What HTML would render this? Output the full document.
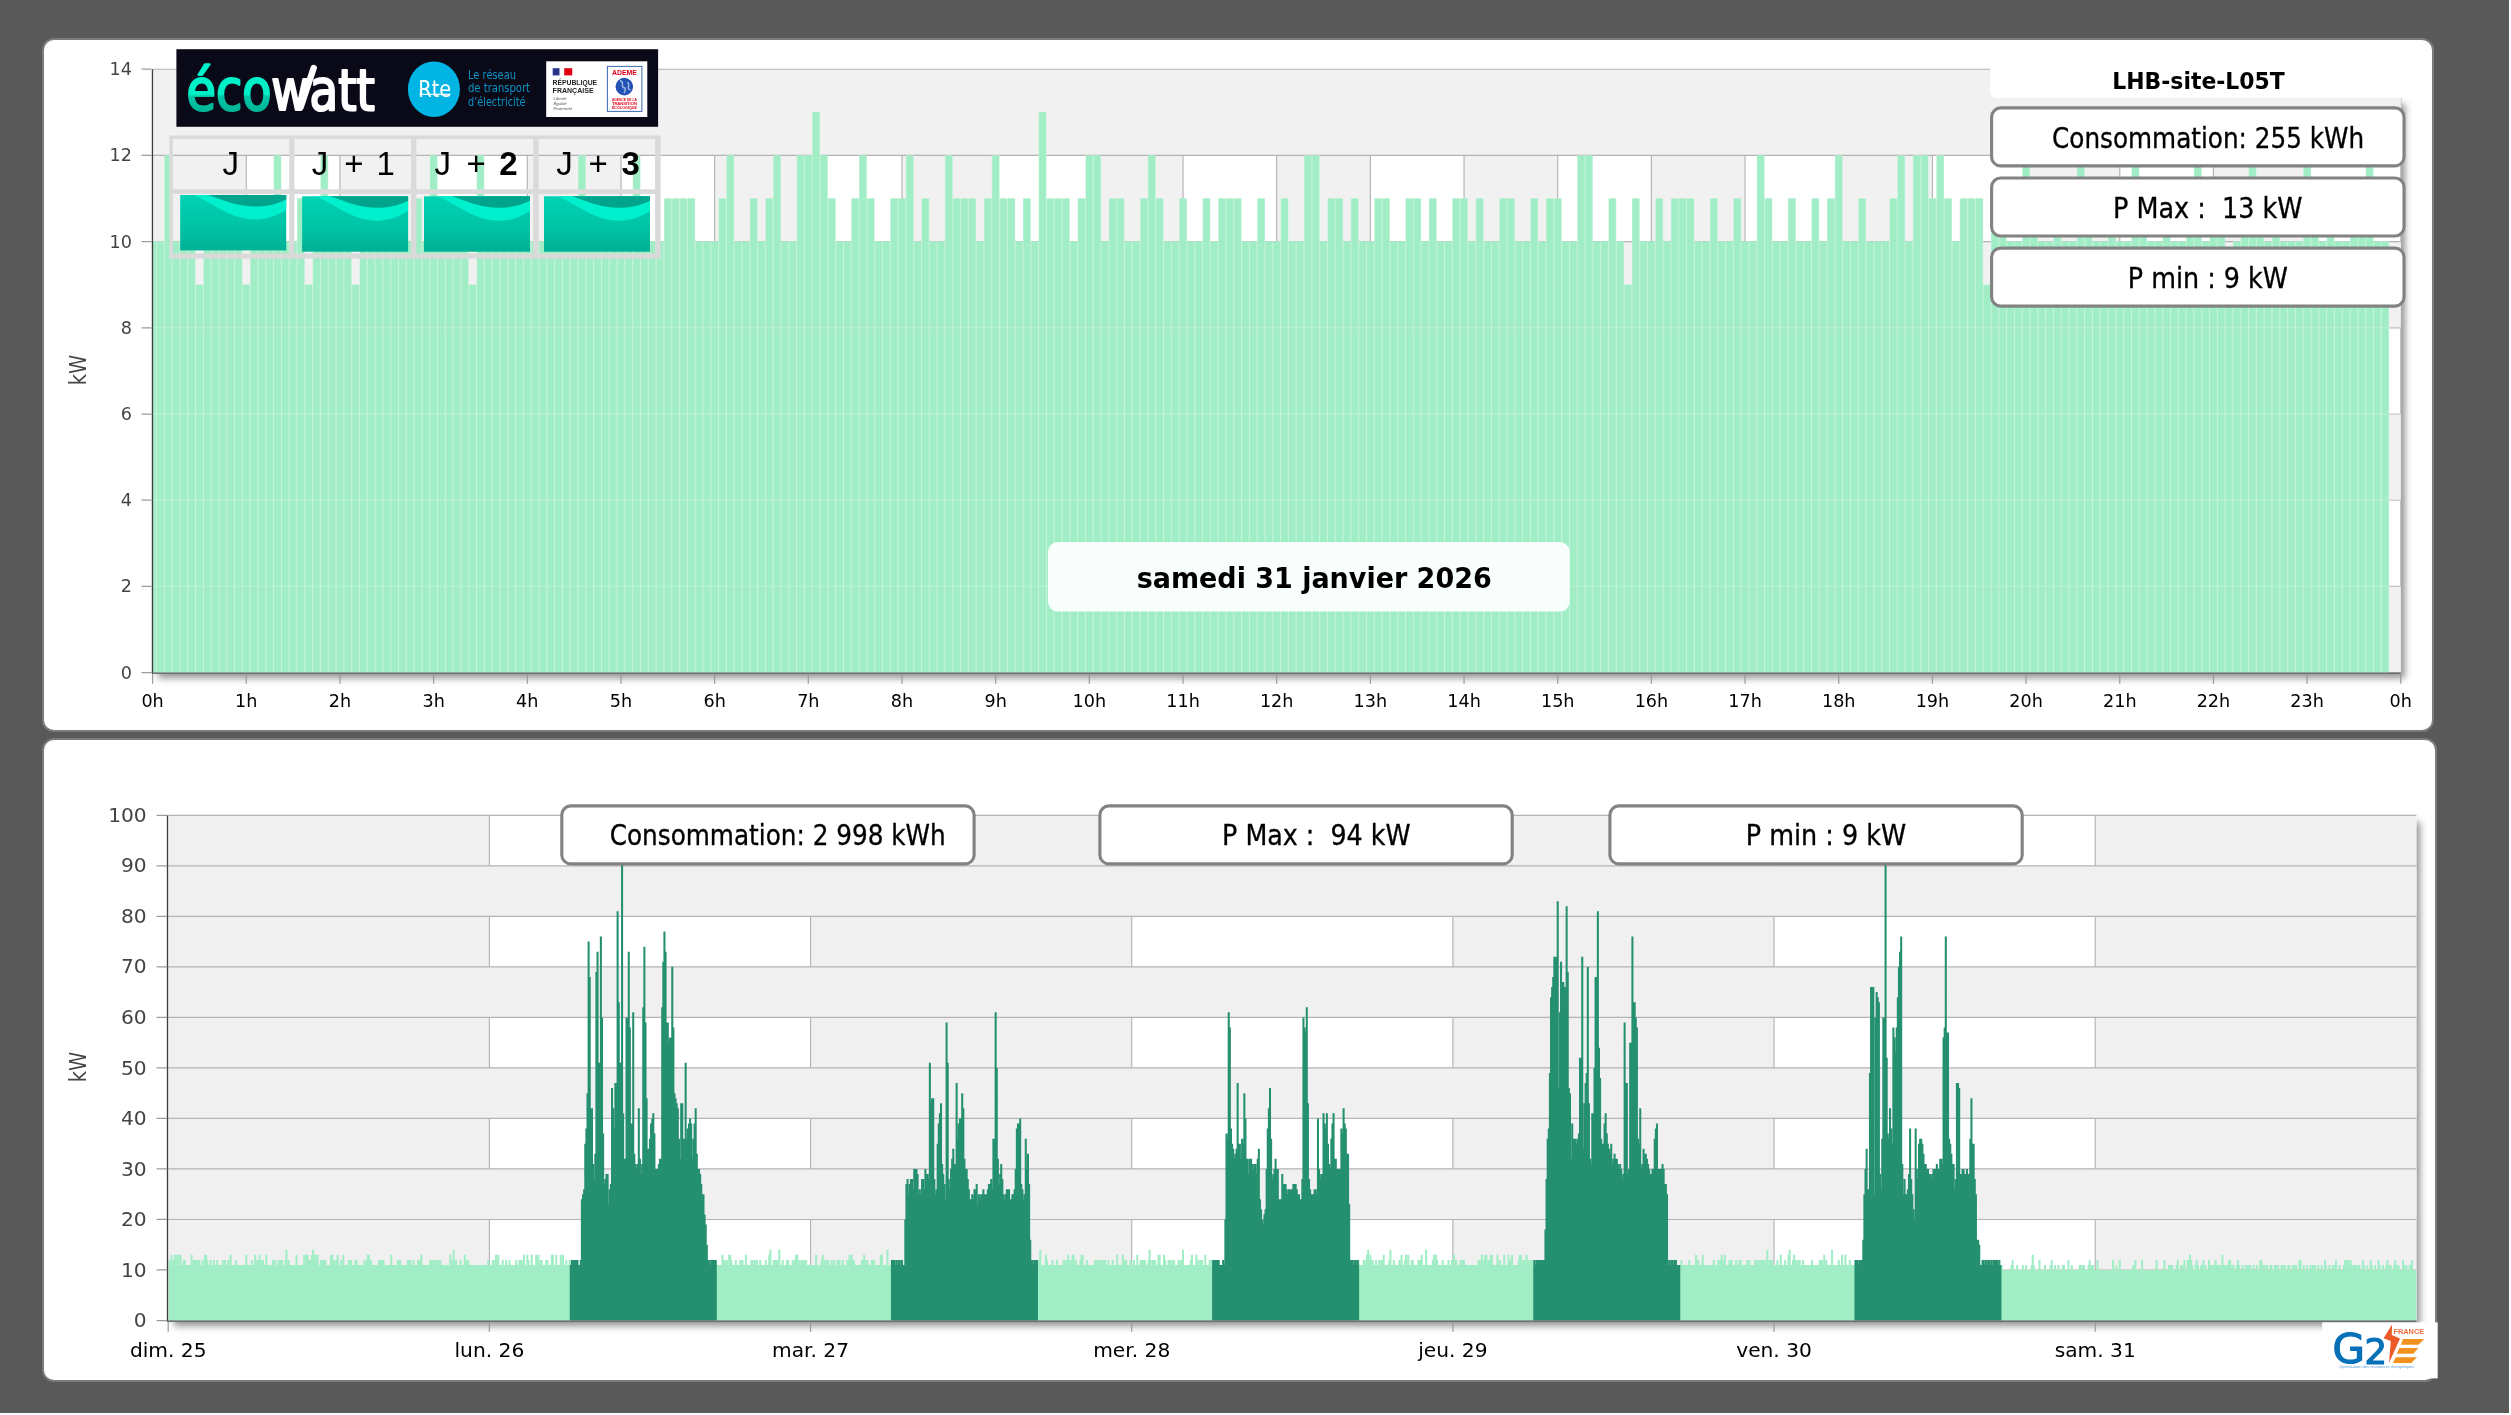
<!DOCTYPE html>
<html lang="fr">
<head>
<meta charset="utf-8">
<title>LHB-site-L05T - Consommation</title>
<style>
html,body{margin:0;padding:0;background:#fff}
body{width:2511px;height:1415px;overflow:hidden;position:relative;font-family:"DejaVu Sans","Liberation Sans",sans-serif}
#page{position:absolute;left:0;top:0;width:2509px;height:1413.3px;background:#595959;overflow:hidden}
.panel{position:absolute;background:#fff;border:2px solid #7b7b7b;border-radius:12px;box-sizing:border-box}
#p1{left:42px;top:38px;width:2392px;height:694px}
#p2{left:42px;top:738px;width:2395px;height:644px}
.shadow{position:absolute;background:#fff;box-shadow:4px 4px 7px rgba(0,0,0,.43)}
#s1{left:154px;top:100px;width:2246.8px;height:573.8px}
#s2{left:170px;top:818px;width:2246.4px;height:504px}
svg.layer{position:absolute;left:0;top:0;width:2511px;height:1415px;overflow:hidden;will-change:transform}
svg.layer text{font-family:"DejaVu Sans",Verdana,sans-serif;font-size:17.6px}
svg.layer text.tah{font-family:"DejaVu Sans Condensed","DejaVu Sans",Tahoma,sans-serif;font-stretch:condensed;font-size:27.8px;fill:#000;stroke:#000;stroke-width:.3px}
svg.layer text.tahb{font-family:"DejaVu Sans Condensed","DejaVu Sans",Tahoma,sans-serif;font-stretch:condensed;font-weight:bold;fill:#000}
svg.layer text.ari{font-family:"Liberation Sans",Arial,sans-serif}
</style>
</head>
<body>
<div id="page">
<div class="panel" id="p1"></div>
<div class="panel" id="p2"></div>
<div class="shadow" id="s1"></div>
<div class="shadow" id="s2"></div>
<svg class="layer" id="chart1" viewBox="0 0 2511 1415">
<rect x="152.6" y="69.2" width="2248.2" height="603.4" fill="#fff"/>
<rect x="152.6" y="69.2" width="93.68" height="603.4" fill="#f1f1f1"/>
<rect x="339.95" y="69.2" width="93.68" height="603.4" fill="#f1f1f1"/>
<rect x="527.3" y="69.2" width="93.68" height="603.4" fill="#f1f1f1"/>
<rect x="714.65" y="69.2" width="93.68" height="603.4" fill="#f1f1f1"/>
<rect x="902" y="69.2" width="93.68" height="603.4" fill="#f1f1f1"/>
<rect x="1089.35" y="69.2" width="93.68" height="603.4" fill="#f1f1f1"/>
<rect x="1276.7" y="69.2" width="93.68" height="603.4" fill="#f1f1f1"/>
<rect x="1464.05" y="69.2" width="93.68" height="603.4" fill="#f1f1f1"/>
<rect x="1651.4" y="69.2" width="93.68" height="603.4" fill="#f1f1f1"/>
<rect x="1838.75" y="69.2" width="93.68" height="603.4" fill="#f1f1f1"/>
<rect x="2026.1" y="69.2" width="93.68" height="603.4" fill="#f1f1f1"/>
<rect x="2213.45" y="69.2" width="93.68" height="603.4" fill="#f1f1f1"/>
<path d="M246.28 69.2V672.6M339.95 69.2V672.6M433.62 69.2V672.6M527.3 69.2V672.6M620.98 69.2V672.6M714.65 69.2V672.6M808.33 69.2V672.6M902 69.2V672.6M995.68 69.2V672.6M1089.35 69.2V672.6M1183.03 69.2V672.6M1276.7 69.2V672.6M1370.38 69.2V672.6M1464.05 69.2V672.6M1557.73 69.2V672.6M1651.4 69.2V672.6M1745.08 69.2V672.6M1838.75 69.2V672.6M1932.43 69.2V672.6M2026.1 69.2V672.6M2119.78 69.2V672.6M2213.45 69.2V672.6M2307.12 69.2V672.6M2400.8 69.2V672.6" stroke="#b4b4b4" stroke-width="1.15" fill="none"/>
<rect x="152.6" y="69.2" width="2248.2" height="86.2" fill="#f1f1f1"/>
<rect x="152.6" y="241.6" width="2248.2" height="86.2" fill="#f1f1f1"/>
<rect x="152.6" y="414" width="2248.2" height="86.2" fill="#f1f1f1"/>
<rect x="152.6" y="586.4" width="2248.2" height="86.2" fill="#f1f1f1"/>
<path d="M152.6 672.6H2400.8M152.6 586.4H2400.8M152.6 500.2H2400.8M152.6 414H2400.8M152.6 327.8H2400.8M152.6 241.6H2400.8M152.6 155.4H2400.8M152.6 69.2H2400.8" stroke="#b4b4b4" stroke-width="1.15" fill="none"/>
<path d="M153 672.6V241.6H156.5V672.6ZM156.5 672.6V241.6H164.31V672.6ZM164.31 672.6V155.4H172.12V672.6ZM172.12 672.6V241.6H179.92V672.6ZM179.92 672.6V241.6H187.73V672.6ZM187.73 672.6V241.6H195.53V672.6ZM195.53 672.6V284.7H203.34V672.6ZM203.34 672.6V241.6H211.15V672.6ZM211.15 672.6V241.6H218.95V672.6ZM218.95 672.6V241.6H226.76V672.6ZM226.76 672.6V241.6H234.57V672.6ZM234.57 672.6V241.6H242.37V672.6ZM242.37 672.6V284.7H250.18V672.6ZM250.18 672.6V241.6H257.98V672.6ZM257.98 672.6V241.6H265.79V672.6ZM265.79 672.6V241.6H273.6V672.6ZM273.6 672.6V155.4H281.4V672.6ZM281.4 672.6V241.6H289.21V672.6ZM289.21 672.6V241.6H297.02V672.6ZM297.02 672.6V198.5H304.82V672.6ZM304.82 672.6V284.7H312.63V672.6ZM312.63 672.6V241.6H320.43V672.6ZM320.43 672.6V155.4H328.24V672.6ZM328.24 672.6V241.6H336.05V672.6ZM336.05 672.6V241.6H343.85V672.6ZM343.85 672.6V241.6H351.66V672.6ZM351.66 672.6V284.7H359.47V672.6ZM359.47 672.6V241.6H367.27V672.6ZM367.27 672.6V241.6H375.08V672.6ZM375.08 672.6V241.6H382.88V672.6ZM382.88 672.6V241.6H390.69V672.6ZM390.69 672.6V241.6H398.5V672.6ZM398.5 672.6V241.6H406.3V672.6ZM406.3 672.6V241.6H414.11V672.6ZM414.11 672.6V198.5H421.92V672.6ZM421.92 672.6V241.6H429.72V672.6ZM429.72 672.6V155.4H437.53V672.6ZM437.53 672.6V241.6H445.33V672.6ZM445.33 672.6V241.6H453.14V672.6ZM453.14 672.6V241.6H460.95V672.6ZM460.95 672.6V241.6H468.75V672.6ZM468.75 672.6V284.7H476.56V672.6ZM476.56 672.6V155.4H484.37V672.6ZM484.37 672.6V241.6H492.17V672.6ZM492.17 672.6V241.6H499.98V672.6ZM499.98 672.6V241.6H507.78V672.6ZM507.78 672.6V241.6H515.59V672.6ZM515.59 672.6V241.6H523.4V672.6ZM523.4 672.6V241.6H531.2V672.6ZM531.2 672.6V241.6H539.01V672.6ZM539.01 672.6V241.6H546.82V672.6ZM546.82 672.6V241.6H554.62V672.6ZM554.62 672.6V241.6H562.43V672.6ZM562.43 672.6V241.6H570.23V672.6ZM570.23 672.6V241.6H578.04V672.6ZM578.04 672.6V155.4H585.85V672.6ZM585.85 672.6V241.6H593.65V672.6ZM593.65 672.6V241.6H601.46V672.6ZM601.46 672.6V241.6H609.27V672.6ZM609.27 672.6V241.6H617.07V672.6ZM617.07 672.6V241.6H624.88V672.6ZM624.88 672.6V241.6H632.68V672.6ZM632.68 672.6V155.4H640.49V672.6ZM640.49 672.6V241.6H648.3V672.6ZM648.3 672.6V241.6H656.1V672.6ZM656.1 672.6V241.6H663.91V672.6ZM663.91 672.6V198.5H671.72V672.6ZM671.72 672.6V198.5H679.52V672.6ZM679.52 672.6V198.5H687.33V672.6ZM687.33 672.6V198.5H695.13V672.6ZM695.13 672.6V241.6H702.94V672.6ZM702.94 672.6V241.6H710.75V672.6ZM710.75 672.6V241.6H718.55V672.6ZM718.55 672.6V198.5H726.36V672.6ZM726.36 672.6V155.4H734.17V672.6ZM734.17 672.6V241.6H741.97V672.6ZM741.97 672.6V241.6H749.78V672.6ZM749.78 672.6V198.5H757.58V672.6ZM757.58 672.6V241.6H765.39V672.6ZM765.39 672.6V198.5H773.2V672.6ZM773.2 672.6V155.4H781V672.6ZM781 672.6V241.6H788.81V672.6ZM788.81 672.6V241.6H796.62V672.6ZM796.62 672.6V155.4H804.42V672.6ZM804.42 672.6V155.4H812.23V672.6ZM812.23 672.6V112.3H820.03V672.6ZM820.03 672.6V155.4H827.84V672.6ZM827.84 672.6V198.5H835.65V672.6ZM835.65 672.6V241.6H843.45V672.6ZM843.45 672.6V241.6H851.26V672.6ZM851.26 672.6V198.5H859.07V672.6ZM859.07 672.6V155.4H866.87V672.6ZM866.87 672.6V198.5H874.68V672.6ZM874.68 672.6V241.6H882.48V672.6ZM882.48 672.6V241.6H890.29V672.6ZM890.29 672.6V198.5H898.1V672.6ZM898.1 672.6V198.5H905.9V672.6ZM905.9 672.6V155.4H913.71V672.6ZM913.71 672.6V241.6H921.52V672.6ZM921.52 672.6V198.5H929.32V672.6ZM929.32 672.6V241.6H937.13V672.6ZM937.13 672.6V241.6H944.93V672.6ZM944.93 672.6V155.4H952.74V672.6ZM952.74 672.6V198.5H960.55V672.6ZM960.55 672.6V198.5H968.35V672.6ZM968.35 672.6V198.5H976.16V672.6ZM976.16 672.6V241.6H983.97V672.6ZM983.97 672.6V198.5H991.77V672.6ZM991.77 672.6V155.4H999.58V672.6ZM999.58 672.6V198.5H1007.38V672.6ZM1007.38 672.6V198.5H1015.19V672.6ZM1015.19 672.6V241.6H1023V672.6ZM1023 672.6V198.5H1030.8V672.6ZM1030.8 672.6V241.6H1038.61V672.6ZM1038.61 672.6V112.3H1046.42V672.6ZM1046.42 672.6V198.5H1054.22V672.6ZM1054.22 672.6V198.5H1062.03V672.6ZM1062.03 672.6V198.5H1069.83V672.6ZM1069.83 672.6V241.6H1077.64V672.6ZM1077.64 672.6V198.5H1085.45V672.6ZM1085.45 672.6V155.4H1093.25V672.6ZM1093.25 672.6V155.4H1101.06V672.6ZM1101.06 672.6V241.6H1108.87V672.6ZM1108.87 672.6V198.5H1116.67V672.6ZM1116.67 672.6V198.5H1124.48V672.6ZM1124.48 672.6V241.6H1132.28V672.6ZM1132.28 672.6V241.6H1140.09V672.6ZM1140.09 672.6V198.5H1147.9V672.6ZM1147.9 672.6V155.4H1155.7V672.6ZM1155.7 672.6V198.5H1163.51V672.6ZM1163.51 672.6V241.6H1171.32V672.6ZM1171.32 672.6V241.6H1179.12V672.6ZM1179.12 672.6V198.5H1186.93V672.6ZM1186.93 672.6V241.6H1194.73V672.6ZM1194.73 672.6V241.6H1202.54V672.6ZM1202.54 672.6V198.5H1210.35V672.6ZM1210.35 672.6V241.6H1218.15V672.6ZM1218.15 672.6V198.5H1225.96V672.6ZM1225.96 672.6V198.5H1233.77V672.6ZM1233.77 672.6V198.5H1241.57V672.6ZM1241.57 672.6V241.6H1249.38V672.6ZM1249.38 672.6V241.6H1257.18V672.6ZM1257.18 672.6V198.5H1264.99V672.6ZM1264.99 672.6V241.6H1272.8V672.6ZM1272.8 672.6V241.6H1280.6V672.6ZM1280.6 672.6V198.5H1288.41V672.6ZM1288.41 672.6V241.6H1296.22V672.6ZM1296.22 672.6V241.6H1304.02V672.6ZM1304.02 672.6V155.4H1311.83V672.6ZM1311.83 672.6V155.4H1319.63V672.6ZM1319.63 672.6V241.6H1327.44V672.6ZM1327.44 672.6V198.5H1335.25V672.6ZM1335.25 672.6V198.5H1343.05V672.6ZM1343.05 672.6V241.6H1350.86V672.6ZM1350.86 672.6V198.5H1358.67V672.6ZM1358.67 672.6V241.6H1366.47V672.6ZM1366.47 672.6V241.6H1374.28V672.6ZM1374.28 672.6V198.5H1382.08V672.6ZM1382.08 672.6V198.5H1389.89V672.6ZM1389.89 672.6V241.6H1397.7V672.6ZM1397.7 672.6V241.6H1405.5V672.6ZM1405.5 672.6V198.5H1413.31V672.6ZM1413.31 672.6V198.5H1421.12V672.6ZM1421.12 672.6V241.6H1428.92V672.6ZM1428.92 672.6V198.5H1436.73V672.6ZM1436.73 672.6V241.6H1444.53V672.6ZM1444.53 672.6V241.6H1452.34V672.6ZM1452.34 672.6V198.5H1460.15V672.6ZM1460.15 672.6V198.5H1467.95V672.6ZM1467.95 672.6V241.6H1475.76V672.6ZM1475.76 672.6V198.5H1483.57V672.6ZM1483.57 672.6V241.6H1491.37V672.6ZM1491.37 672.6V241.6H1499.18V672.6ZM1499.18 672.6V198.5H1506.98V672.6ZM1506.98 672.6V198.5H1514.79V672.6ZM1514.79 672.6V241.6H1522.6V672.6ZM1522.6 672.6V241.6H1530.4V672.6ZM1530.4 672.6V198.5H1538.21V672.6ZM1538.21 672.6V241.6H1546.02V672.6ZM1546.02 672.6V198.5H1553.82V672.6ZM1553.82 672.6V198.5H1561.63V672.6ZM1561.63 672.6V241.6H1569.43V672.6ZM1569.43 672.6V241.6H1577.24V672.6ZM1577.24 672.6V155.4H1585.05V672.6ZM1585.05 672.6V155.4H1592.85V672.6ZM1592.85 672.6V241.6H1600.66V672.6ZM1600.66 672.6V241.6H1608.47V672.6ZM1608.47 672.6V198.5H1616.27V672.6ZM1616.27 672.6V241.6H1624.08V672.6ZM1624.08 672.6V284.7H1631.88V672.6ZM1631.88 672.6V198.5H1639.69V672.6ZM1639.69 672.6V241.6H1647.5V672.6ZM1647.5 672.6V241.6H1655.3V672.6ZM1655.3 672.6V198.5H1663.11V672.6ZM1663.11 672.6V241.6H1670.92V672.6ZM1670.92 672.6V198.5H1678.72V672.6ZM1678.72 672.6V198.5H1686.53V672.6ZM1686.53 672.6V198.5H1694.33V672.6ZM1694.33 672.6V241.6H1702.14V672.6ZM1702.14 672.6V241.6H1709.95V672.6ZM1709.95 672.6V198.5H1717.75V672.6ZM1717.75 672.6V241.6H1725.56V672.6ZM1725.56 672.6V241.6H1733.37V672.6ZM1733.37 672.6V198.5H1741.17V672.6ZM1741.17 672.6V241.6H1748.98V672.6ZM1748.98 672.6V241.6H1756.78V672.6ZM1756.78 672.6V155.4H1764.59V672.6ZM1764.59 672.6V198.5H1772.4V672.6ZM1772.4 672.6V241.6H1780.2V672.6ZM1780.2 672.6V241.6H1788.01V672.6ZM1788.01 672.6V198.5H1795.82V672.6ZM1795.82 672.6V241.6H1803.62V672.6ZM1803.62 672.6V241.6H1811.43V672.6ZM1811.43 672.6V198.5H1819.23V672.6ZM1819.23 672.6V241.6H1827.04V672.6ZM1827.04 672.6V198.5H1834.85V672.6ZM1834.85 672.6V155.4H1842.65V672.6ZM1842.65 672.6V241.6H1850.46V672.6ZM1850.46 672.6V241.6H1858.27V672.6ZM1858.27 672.6V198.5H1866.07V672.6ZM1866.07 672.6V241.6H1873.88V672.6ZM1873.88 672.6V241.6H1881.68V672.6ZM1881.68 672.6V241.6H1889.49V672.6ZM1889.49 672.6V198.5H1897.3V672.6ZM1897.3 672.6V155.4H1905.1V672.6ZM1905.1 672.6V241.6H1912.91V672.6ZM1912.91 672.6V155.4H1920.72V672.6ZM1920.72 672.6V155.4H1928.52V672.6ZM1928.52 672.6V198.5H1936.33V672.6ZM1936.33 672.6V155.4H1944.13V672.6ZM1944.13 672.6V198.5H1951.94V672.6ZM1951.94 672.6V241.6H1959.75V672.6ZM1959.75 672.6V198.5H1967.55V672.6ZM1967.55 672.6V198.5H1975.36V672.6ZM1975.36 672.6V198.5H1983.17V672.6ZM1983.17 672.6V284.7H1990.97V672.6ZM1990.97 672.6V198.5H1998.78V672.6ZM1998.78 672.6V198.5H2006.58V672.6ZM2006.58 672.6V241.6H2014.39V672.6ZM2014.39 672.6V241.6H2022.2V672.6ZM2022.2 672.6V155.4H2030V672.6ZM2030 672.6V198.5H2037.81V672.6ZM2037.81 672.6V241.6H2045.62V672.6ZM2045.62 672.6V241.6H2053.42V672.6ZM2053.42 672.6V198.5H2061.23V672.6ZM2061.23 672.6V241.6H2069.03V672.6ZM2069.03 672.6V241.6H2076.84V672.6ZM2076.84 672.6V155.4H2084.65V672.6ZM2084.65 672.6V198.5H2092.45V672.6ZM2092.45 672.6V241.6H2100.26V672.6ZM2100.26 672.6V241.6H2108.07V672.6ZM2108.07 672.6V198.5H2115.87V672.6ZM2115.87 672.6V241.6H2123.68V672.6ZM2123.68 672.6V241.6H2131.48V672.6ZM2131.48 672.6V155.4H2139.29V672.6ZM2139.29 672.6V198.5H2147.1V672.6ZM2147.1 672.6V241.6H2154.9V672.6ZM2154.9 672.6V241.6H2162.71V672.6ZM2162.71 672.6V198.5H2170.52V672.6ZM2170.52 672.6V241.6H2178.32V672.6ZM2178.32 672.6V241.6H2186.13V672.6ZM2186.13 672.6V198.5H2193.93V672.6ZM2193.93 672.6V155.4H2201.74V672.6ZM2201.74 672.6V241.6H2209.55V672.6ZM2209.55 672.6V198.5H2217.35V672.6ZM2217.35 672.6V198.5H2225.16V672.6ZM2225.16 672.6V284.7H2232.97V672.6ZM2232.97 672.6V241.6H2240.77V672.6ZM2240.77 672.6V198.5H2248.58V672.6ZM2248.58 672.6V155.4H2256.38V672.6ZM2256.38 672.6V198.5H2264.19V672.6ZM2264.19 672.6V241.6H2272V672.6ZM2272 672.6V198.5H2279.8V672.6ZM2279.8 672.6V241.6H2287.61V672.6ZM2287.61 672.6V241.6H2295.42V672.6ZM2295.42 672.6V241.6H2303.22V672.6ZM2303.22 672.6V155.4H2311.03V672.6ZM2311.03 672.6V198.5H2318.83V672.6ZM2318.83 672.6V241.6H2326.64V672.6ZM2326.64 672.6V198.5H2334.45V672.6ZM2334.45 672.6V241.6H2342.25V672.6ZM2342.25 672.6V241.6H2350.06V672.6ZM2350.06 672.6V198.5H2357.87V672.6ZM2357.87 672.6V198.5H2365.67V672.6ZM2365.67 672.6V155.4H2373.48V672.6ZM2373.48 672.6V241.6H2381.28V672.6ZM2381.28 672.6V241.6H2389.09V672.6Z" fill="#c6f3dc"/>
<path d="M153 672.6V241.6H155.95V672.6ZM157.06 672.6V241.6H163.76V672.6ZM164.86 672.6V155.4H171.56V672.6ZM172.67 672.6V241.6H179.37V672.6ZM180.47 672.6V241.6H187.17V672.6ZM188.28 672.6V241.6H194.98V672.6ZM196.09 672.6V284.7H202.79V672.6ZM203.89 672.6V241.6H210.59V672.6ZM211.7 672.6V241.6H218.4V672.6ZM219.51 672.6V241.6H226.21V672.6ZM227.31 672.6V241.6H234.01V672.6ZM235.12 672.6V241.6H241.82V672.6ZM242.93 672.6V284.7H249.62V672.6ZM250.73 672.6V241.6H257.43V672.6ZM258.54 672.6V241.6H265.24V672.6ZM266.34 672.6V241.6H273.04V672.6ZM274.15 672.6V155.4H280.85V672.6ZM281.96 672.6V241.6H288.66V672.6ZM289.76 672.6V241.6H296.46V672.6ZM297.57 672.6V198.5H304.27V672.6ZM305.38 672.6V284.7H312.08V672.6ZM313.18 672.6V241.6H319.88V672.6ZM320.99 672.6V155.4H327.69V672.6ZM328.79 672.6V241.6H335.49V672.6ZM336.6 672.6V241.6H343.3V672.6ZM344.41 672.6V241.6H351.11V672.6ZM352.21 672.6V284.7H358.91V672.6ZM360.02 672.6V241.6H366.72V672.6ZM367.83 672.6V241.6H374.53V672.6ZM375.63 672.6V241.6H382.33V672.6ZM383.44 672.6V241.6H390.14V672.6ZM391.24 672.6V241.6H397.94V672.6ZM399.05 672.6V241.6H405.75V672.6ZM406.86 672.6V241.6H413.56V672.6ZM414.66 672.6V198.5H421.36V672.6ZM422.47 672.6V241.6H429.17V672.6ZM430.27 672.6V155.4H436.98V672.6ZM438.08 672.6V241.6H444.78V672.6ZM445.89 672.6V241.6H452.59V672.6ZM453.69 672.6V241.6H460.39V672.6ZM461.5 672.6V241.6H468.2V672.6ZM469.31 672.6V284.7H476.01V672.6ZM477.11 672.6V155.4H483.81V672.6ZM484.92 672.6V241.6H491.62V672.6ZM492.73 672.6V241.6H499.43V672.6ZM500.53 672.6V241.6H507.23V672.6ZM508.34 672.6V241.6H515.04V672.6ZM516.14 672.6V241.6H522.84V672.6ZM523.95 672.6V241.6H530.65V672.6ZM531.76 672.6V241.6H538.46V672.6ZM539.56 672.6V241.6H546.26V672.6ZM547.37 672.6V241.6H554.07V672.6ZM555.18 672.6V241.6H561.88V672.6ZM562.98 672.6V241.6H569.68V672.6ZM570.79 672.6V241.6H577.49V672.6ZM578.59 672.6V155.4H585.29V672.6ZM586.4 672.6V241.6H593.1V672.6ZM594.21 672.6V241.6H600.91V672.6ZM602.01 672.6V241.6H608.71V672.6ZM609.82 672.6V241.6H616.52V672.6ZM617.62 672.6V241.6H624.33V672.6ZM625.43 672.6V241.6H632.13V672.6ZM633.24 672.6V155.4H639.94V672.6ZM641.04 672.6V241.6H647.74V672.6ZM648.85 672.6V241.6H655.55V672.6ZM656.66 672.6V241.6H663.36V672.6ZM664.46 672.6V198.5H671.16V672.6ZM672.27 672.6V198.5H678.97V672.6ZM680.08 672.6V198.5H686.78V672.6ZM687.88 672.6V198.5H694.58V672.6ZM695.69 672.6V241.6H702.39V672.6ZM703.49 672.6V241.6H710.19V672.6ZM711.3 672.6V241.6H718V672.6ZM719.11 672.6V198.5H725.81V672.6ZM726.91 672.6V155.4H733.61V672.6ZM734.72 672.6V241.6H741.42V672.6ZM742.53 672.6V241.6H749.23V672.6ZM750.33 672.6V198.5H757.03V672.6ZM758.14 672.6V241.6H764.84V672.6ZM765.94 672.6V198.5H772.64V672.6ZM773.75 672.6V155.4H780.45V672.6ZM781.56 672.6V241.6H788.26V672.6ZM789.36 672.6V241.6H796.06V672.6ZM797.17 672.6V155.4H803.87V672.6ZM804.98 672.6V155.4H811.68V672.6ZM812.78 672.6V112.3H819.48V672.6ZM820.59 672.6V155.4H827.29V672.6ZM828.39 672.6V198.5H835.09V672.6ZM836.2 672.6V241.6H842.9V672.6ZM844.01 672.6V241.6H850.71V672.6ZM851.81 672.6V198.5H858.51V672.6ZM859.62 672.6V155.4H866.32V672.6ZM867.43 672.6V198.5H874.13V672.6ZM875.23 672.6V241.6H881.93V672.6ZM883.04 672.6V241.6H889.74V672.6ZM890.84 672.6V198.5H897.54V672.6ZM898.65 672.6V198.5H905.35V672.6ZM906.46 672.6V155.4H913.16V672.6ZM914.26 672.6V241.6H920.96V672.6ZM922.07 672.6V198.5H928.77V672.6ZM929.88 672.6V241.6H936.58V672.6ZM937.68 672.6V241.6H944.38V672.6ZM945.49 672.6V155.4H952.19V672.6ZM953.29 672.6V198.5H959.99V672.6ZM961.1 672.6V198.5H967.8V672.6ZM968.91 672.6V198.5H975.61V672.6ZM976.71 672.6V241.6H983.41V672.6ZM984.52 672.6V198.5H991.22V672.6ZM992.33 672.6V155.4H999.03V672.6ZM1000.13 672.6V198.5H1006.83V672.6ZM1007.94 672.6V198.5H1014.64V672.6ZM1015.74 672.6V241.6H1022.44V672.6ZM1023.55 672.6V198.5H1030.25V672.6ZM1031.36 672.6V241.6H1038.06V672.6ZM1039.16 672.6V112.3H1045.86V672.6ZM1046.97 672.6V198.5H1053.67V672.6ZM1054.78 672.6V198.5H1061.47V672.6ZM1062.58 672.6V198.5H1069.28V672.6ZM1070.39 672.6V241.6H1077.09V672.6ZM1078.19 672.6V198.5H1084.89V672.6ZM1086 672.6V155.4H1092.7V672.6ZM1093.81 672.6V155.4H1100.51V672.6ZM1101.61 672.6V241.6H1108.31V672.6ZM1109.42 672.6V198.5H1116.12V672.6ZM1117.23 672.6V198.5H1123.92V672.6ZM1125.03 672.6V241.6H1131.73V672.6ZM1132.84 672.6V241.6H1139.54V672.6ZM1140.64 672.6V198.5H1147.34V672.6ZM1148.45 672.6V155.4H1155.15V672.6ZM1156.26 672.6V198.5H1162.96V672.6ZM1164.06 672.6V241.6H1170.76V672.6ZM1171.87 672.6V241.6H1178.57V672.6ZM1179.68 672.6V198.5H1186.38V672.6ZM1187.48 672.6V241.6H1194.18V672.6ZM1195.29 672.6V241.6H1201.99V672.6ZM1203.09 672.6V198.5H1209.79V672.6ZM1210.9 672.6V241.6H1217.6V672.6ZM1218.71 672.6V198.5H1225.41V672.6ZM1226.51 672.6V198.5H1233.21V672.6ZM1234.32 672.6V198.5H1241.02V672.6ZM1242.13 672.6V241.6H1248.83V672.6ZM1249.93 672.6V241.6H1256.63V672.6ZM1257.74 672.6V198.5H1264.44V672.6ZM1265.54 672.6V241.6H1272.24V672.6ZM1273.35 672.6V241.6H1280.05V672.6ZM1281.16 672.6V198.5H1287.86V672.6ZM1288.96 672.6V241.6H1295.66V672.6ZM1296.77 672.6V241.6H1303.47V672.6ZM1304.58 672.6V155.4H1311.28V672.6ZM1312.38 672.6V155.4H1319.08V672.6ZM1320.19 672.6V241.6H1326.89V672.6ZM1327.99 672.6V198.5H1334.69V672.6ZM1335.8 672.6V198.5H1342.5V672.6ZM1343.61 672.6V241.6H1350.31V672.6ZM1351.41 672.6V198.5H1358.11V672.6ZM1359.22 672.6V241.6H1365.92V672.6ZM1367.03 672.6V241.6H1373.72V672.6ZM1374.83 672.6V198.5H1381.53V672.6ZM1382.64 672.6V198.5H1389.34V672.6ZM1390.44 672.6V241.6H1397.14V672.6ZM1398.25 672.6V241.6H1404.95V672.6ZM1406.06 672.6V198.5H1412.76V672.6ZM1413.86 672.6V198.5H1420.56V672.6ZM1421.67 672.6V241.6H1428.37V672.6ZM1429.48 672.6V198.5H1436.17V672.6ZM1437.28 672.6V241.6H1443.98V672.6ZM1445.09 672.6V241.6H1451.79V672.6ZM1452.89 672.6V198.5H1459.59V672.6ZM1460.7 672.6V198.5H1467.4V672.6ZM1468.51 672.6V241.6H1475.21V672.6ZM1476.31 672.6V198.5H1483.01V672.6ZM1484.12 672.6V241.6H1490.82V672.6ZM1491.93 672.6V241.6H1498.62V672.6ZM1499.73 672.6V198.5H1506.43V672.6ZM1507.54 672.6V198.5H1514.24V672.6ZM1515.34 672.6V241.6H1522.04V672.6ZM1523.15 672.6V241.6H1529.85V672.6ZM1530.96 672.6V198.5H1537.66V672.6ZM1538.76 672.6V241.6H1545.46V672.6ZM1546.57 672.6V198.5H1553.27V672.6ZM1554.38 672.6V198.5H1561.08V672.6ZM1562.18 672.6V241.6H1568.88V672.6ZM1569.99 672.6V241.6H1576.69V672.6ZM1577.79 672.6V155.4H1584.49V672.6ZM1585.6 672.6V155.4H1592.3V672.6ZM1593.41 672.6V241.6H1600.11V672.6ZM1601.21 672.6V241.6H1607.91V672.6ZM1609.02 672.6V198.5H1615.72V672.6ZM1616.83 672.6V241.6H1623.53V672.6ZM1624.63 672.6V284.7H1631.33V672.6ZM1632.44 672.6V198.5H1639.14V672.6ZM1640.24 672.6V241.6H1646.94V672.6ZM1648.05 672.6V241.6H1654.75V672.6ZM1655.86 672.6V198.5H1662.56V672.6ZM1663.66 672.6V241.6H1670.36V672.6ZM1671.47 672.6V198.5H1678.17V672.6ZM1679.28 672.6V198.5H1685.98V672.6ZM1687.08 672.6V198.5H1693.78V672.6ZM1694.89 672.6V241.6H1701.59V672.6ZM1702.69 672.6V241.6H1709.39V672.6ZM1710.5 672.6V198.5H1717.2V672.6ZM1718.31 672.6V241.6H1725.01V672.6ZM1726.11 672.6V241.6H1732.81V672.6ZM1733.92 672.6V198.5H1740.62V672.6ZM1741.73 672.6V241.6H1748.43V672.6ZM1749.53 672.6V241.6H1756.23V672.6ZM1757.34 672.6V155.4H1764.04V672.6ZM1765.14 672.6V198.5H1771.84V672.6ZM1772.95 672.6V241.6H1779.65V672.6ZM1780.76 672.6V241.6H1787.46V672.6ZM1788.56 672.6V198.5H1795.26V672.6ZM1796.37 672.6V241.6H1803.07V672.6ZM1804.18 672.6V241.6H1810.88V672.6ZM1811.98 672.6V198.5H1818.68V672.6ZM1819.79 672.6V241.6H1826.49V672.6ZM1827.59 672.6V198.5H1834.29V672.6ZM1835.4 672.6V155.4H1842.1V672.6ZM1843.21 672.6V241.6H1849.91V672.6ZM1851.01 672.6V241.6H1857.71V672.6ZM1858.82 672.6V198.5H1865.52V672.6ZM1866.63 672.6V241.6H1873.33V672.6ZM1874.43 672.6V241.6H1881.13V672.6ZM1882.24 672.6V241.6H1888.94V672.6ZM1890.04 672.6V198.5H1896.74V672.6ZM1897.85 672.6V155.4H1904.55V672.6ZM1905.66 672.6V241.6H1912.36V672.6ZM1913.46 672.6V155.4H1920.16V672.6ZM1921.27 672.6V155.4H1927.97V672.6ZM1929.08 672.6V198.5H1935.78V672.6ZM1936.88 672.6V155.4H1943.58V672.6ZM1944.69 672.6V198.5H1951.39V672.6ZM1952.49 672.6V241.6H1959.19V672.6ZM1960.3 672.6V198.5H1967V672.6ZM1968.11 672.6V198.5H1974.81V672.6ZM1975.91 672.6V198.5H1982.61V672.6ZM1983.72 672.6V284.7H1990.42V672.6ZM1991.53 672.6V198.5H1998.23V672.6ZM1999.33 672.6V198.5H2006.03V672.6ZM2007.14 672.6V241.6H2013.84V672.6ZM2014.94 672.6V241.6H2021.64V672.6ZM2022.75 672.6V155.4H2029.45V672.6ZM2030.56 672.6V198.5H2037.26V672.6ZM2038.36 672.6V241.6H2045.06V672.6ZM2046.17 672.6V241.6H2052.87V672.6ZM2053.98 672.6V198.5H2060.68V672.6ZM2061.78 672.6V241.6H2068.48V672.6ZM2069.59 672.6V241.6H2076.29V672.6ZM2077.39 672.6V155.4H2084.09V672.6ZM2085.2 672.6V198.5H2091.9V672.6ZM2093.01 672.6V241.6H2099.71V672.6ZM2100.81 672.6V241.6H2107.51V672.6ZM2108.62 672.6V198.5H2115.32V672.6ZM2116.43 672.6V241.6H2123.13V672.6ZM2124.23 672.6V241.6H2130.93V672.6ZM2132.04 672.6V155.4H2138.74V672.6ZM2139.84 672.6V198.5H2146.54V672.6ZM2147.65 672.6V241.6H2154.35V672.6ZM2155.46 672.6V241.6H2162.16V672.6ZM2163.26 672.6V198.5H2169.96V672.6ZM2171.07 672.6V241.6H2177.77V672.6ZM2178.88 672.6V241.6H2185.58V672.6ZM2186.68 672.6V198.5H2193.38V672.6ZM2194.49 672.6V155.4H2201.19V672.6ZM2202.29 672.6V241.6H2208.99V672.6ZM2210.1 672.6V198.5H2216.8V672.6ZM2217.91 672.6V198.5H2224.61V672.6ZM2225.71 672.6V284.7H2232.41V672.6ZM2233.52 672.6V241.6H2240.22V672.6ZM2241.33 672.6V198.5H2248.03V672.6ZM2249.13 672.6V155.4H2255.83V672.6ZM2256.94 672.6V198.5H2263.64V672.6ZM2264.74 672.6V241.6H2271.44V672.6ZM2272.55 672.6V198.5H2279.25V672.6ZM2280.36 672.6V241.6H2287.06V672.6ZM2288.16 672.6V241.6H2294.86V672.6ZM2295.97 672.6V241.6H2302.67V672.6ZM2303.78 672.6V155.4H2310.48V672.6ZM2311.58 672.6V198.5H2318.28V672.6ZM2319.39 672.6V241.6H2326.09V672.6ZM2327.19 672.6V198.5H2333.89V672.6ZM2335 672.6V241.6H2341.7V672.6ZM2342.81 672.6V241.6H2349.51V672.6ZM2350.61 672.6V198.5H2357.31V672.6ZM2358.42 672.6V198.5H2365.12V672.6ZM2366.23 672.6V155.4H2372.93V672.6ZM2374.03 672.6V241.6H2380.73V672.6ZM2381.84 672.6V241.6H2388.54V672.6Z" fill="#a1edc5"/>
<path d="M152.6 586.4H2400.8M152.6 500.2H2400.8M152.6 414H2400.8M152.6 327.8H2400.8" stroke="#fff" stroke-opacity=".18" stroke-width="1.4" fill="none"/>
<path d="M152.45 69.2V673.9" stroke="#3c3c3c" stroke-width="1.3" fill="none"/>
<path d="M152.35 673.25H2400.8" stroke="#707070" stroke-width="1.5" fill="none"/>
<path d="M141.5 672.6H151.6M141.5 586.4H151.6M141.5 500.2H151.6M141.5 414H151.6M141.5 327.8H151.6M141.5 241.6H151.6M141.5 155.4H151.6M141.5 69.2H151.6M152.6 674V683.8M246.28 674V683.8M339.95 674V683.8M433.62 674V683.8M527.3 674V683.8M620.98 674V683.8M714.65 674V683.8M808.33 674V683.8M902 674V683.8M995.68 674V683.8M1089.35 674V683.8M1183.03 674V683.8M1276.7 674V683.8M1370.38 674V683.8M1464.05 674V683.8M1557.73 674V683.8M1651.4 674V683.8M1745.08 674V683.8M1838.75 674V683.8M1932.43 674V683.8M2026.1 674V683.8M2119.78 674V683.8M2213.45 674V683.8M2307.12 674V683.8M2400.8 674V683.8" stroke="#9c9c9c" stroke-width="1.25" fill="none"/>
<text x="132" y="678.5" text-anchor="end" fill="#444">0</text>
<text x="132" y="592.3" text-anchor="end" fill="#444">2</text>
<text x="132" y="506.1" text-anchor="end" fill="#444">4</text>
<text x="132" y="419.9" text-anchor="end" fill="#444">6</text>
<text x="132" y="333.7" text-anchor="end" fill="#444">8</text>
<text x="132" y="247.5" text-anchor="end" fill="#444">10</text>
<text x="132" y="161.3" text-anchor="end" fill="#444">12</text>
<text x="132" y="75.1" text-anchor="end" fill="#444">14</text>
<text x="152.6" y="707" text-anchor="middle" fill="#000">0h</text>
<text x="246.28" y="707" text-anchor="middle" fill="#000">1h</text>
<text x="339.95" y="707" text-anchor="middle" fill="#000">2h</text>
<text x="433.62" y="707" text-anchor="middle" fill="#000">3h</text>
<text x="527.3" y="707" text-anchor="middle" fill="#000">4h</text>
<text x="620.98" y="707" text-anchor="middle" fill="#000">5h</text>
<text x="714.65" y="707" text-anchor="middle" fill="#000">6h</text>
<text x="808.33" y="707" text-anchor="middle" fill="#000">7h</text>
<text x="902" y="707" text-anchor="middle" fill="#000">8h</text>
<text x="995.68" y="707" text-anchor="middle" fill="#000">9h</text>
<text x="1089.35" y="707" text-anchor="middle" fill="#000">10h</text>
<text x="1183.03" y="707" text-anchor="middle" fill="#000">11h</text>
<text x="1276.7" y="707" text-anchor="middle" fill="#000">12h</text>
<text x="1370.38" y="707" text-anchor="middle" fill="#000">13h</text>
<text x="1464.05" y="707" text-anchor="middle" fill="#000">14h</text>
<text x="1557.73" y="707" text-anchor="middle" fill="#000">15h</text>
<text x="1651.4" y="707" text-anchor="middle" fill="#000">16h</text>
<text x="1745.08" y="707" text-anchor="middle" fill="#000">17h</text>
<text x="1838.75" y="707" text-anchor="middle" fill="#000">18h</text>
<text x="1932.43" y="707" text-anchor="middle" fill="#000">19h</text>
<text x="2026.1" y="707" text-anchor="middle" fill="#000">20h</text>
<text x="2119.78" y="707" text-anchor="middle" fill="#000">21h</text>
<text x="2213.45" y="707" text-anchor="middle" fill="#000">22h</text>
<text x="2307.12" y="707" text-anchor="middle" fill="#000">23h</text>
<text x="2400.8" y="707" text-anchor="middle" fill="#000">0h</text>
<text transform="translate(86.4 370) rotate(-90)" text-anchor="middle" fill="#444" style="font-family:&quot;DejaVu Sans Condensed&quot;,&quot;DejaVu Sans&quot;,sans-serif;font-stretch:condensed;font-size:22.4px" textLength="30.5" lengthAdjust="spacingAndGlyphs">kW</text>
<defs>
<linearGradient id="gEco" gradientUnits="userSpaceOnUse" x1="0" y1="68" x2="0" y2="112"><stop offset="0" stop-color="#00f4cc"/><stop offset=".6" stop-color="#00eec6"/><stop offset=".64" stop-color="#00c6a6"/><stop offset="1" stop-color="#00b396"/></linearGradient>
<linearGradient id="gImg" x1="0" y1="0" x2="0" y2="1"><stop offset="0" stop-color="#00d2b4"/><stop offset=".55" stop-color="#00c4a6"/><stop offset="1" stop-color="#00b095"/></linearGradient>
<g id="wave">
<rect x="0" y="0" width="106" height="55.4" fill="url(#gImg)"/>
<path d="M14 0C36 10 52 25 76 24.5C90 24 99 19 106 14.5V0Z" fill="#00f0cd"/>
<path d="M28 0C46 6 58 12 78 11.5C90 11 99 8 106 4.5V0Z" fill="#00a48c"/>
</g>
</defs>
<!-- ecowatt banner -->
<g id="ecowatt">
<rect x="176.4" y="49.2" width="481.7" height="77.6" fill="#0a0918"/>
<text x="186.6" y="110.2" fill="url(#gEco)" stroke="url(#gEco)" stroke-width="2.2" stroke-linejoin="round" style="font-family:&quot;DejaVu Sans Condensed&quot;,&quot;DejaVu Sans&quot;,sans-serif;font-stretch:condensed;font-size:56.6px" textLength="85" lengthAdjust="spacingAndGlyphs">éco</text>
<text x="271.3" y="110.2" fill="#fff" stroke="#fff" stroke-width="2.2" stroke-linejoin="round" style="font-family:&quot;DejaVu Sans Condensed&quot;,&quot;DejaVu Sans&quot;,sans-serif;font-stretch:condensed;font-size:56.6px" textLength="103.5" lengthAdjust="spacingAndGlyphs">watt</text>
<path d="M300.6 107.2L313.7 68" stroke="#fff" stroke-width="6.4" stroke-linecap="round" fill="none"/>
<ellipse cx="433.9" cy="89.2" rx="26" ry="27.8" fill="#00b4e3"/>
<text x="418.3" y="96.5" fill="#fff" style="font-family:&quot;DejaVu Sans&quot;,sans-serif;font-size:23px" textLength="33" lengthAdjust="spacingAndGlyphs">Rte</text>
<path d="M419.3 94.3H450.6" stroke="#fff" stroke-width="1.2"/>
<text fill="#0c93c4" style="font-family:&quot;DejaVu Sans&quot;,sans-serif;font-size:11.6px"><tspan x="468" y="78.9" textLength="48" lengthAdjust="spacingAndGlyphs">Le réseau</tspan><tspan x="468" y="92.4" textLength="62" lengthAdjust="spacingAndGlyphs">de transport</tspan><tspan x="468" y="105.6" textLength="57.5" lengthAdjust="spacingAndGlyphs">d’électricité</tspan></text>
<rect x="546.2" y="61.3" width="101.1" height="55.7" fill="#fff"/>
<rect x="552.7" y="68.2" width="7" height="7.2" fill="#27348b"/><rect x="559.7" y="68.2" width="4.5" height="7.2" fill="#fff"/><rect x="564.2" y="68.2" width="8" height="7.2" fill="#e1000f"/>
<text fill="#1e1e1e" style="font-family:&quot;Liberation Sans&quot;,sans-serif;font-size:7.4px;font-weight:bold"><tspan x="552.6" y="84.8" textLength="44.5" lengthAdjust="spacingAndGlyphs">RÉPUBLIQUE</tspan><tspan x="552.6" y="93" textLength="41" lengthAdjust="spacingAndGlyphs">FRANÇAISE</tspan></text>
<text fill="#555" style="font-family:&quot;Liberation Sans&quot;,sans-serif;font-size:4.4px;font-style:italic"><tspan x="553.4" y="100.4">Liberté</tspan><tspan x="553.4" y="105.4">Égalité</tspan><tspan x="553.4" y="110.4">Fraternité</tspan></text>
<rect x="607.4" y="66.4" width="34.5" height="45" fill="#fff" stroke="#3a6ab8" stroke-width="1"/>
<text x="624.4" y="74.9" text-anchor="middle" fill="#e2001a" style="font-family:&quot;Liberation Sans&quot;,sans-serif;font-size:6.6px;font-weight:bold" textLength="25" lengthAdjust="spacingAndGlyphs">ADEME</text>
<circle cx="624.3" cy="86.6" r="8.8" fill="#2352b4"/>
<path d="M620 80.5q3 1 2.5 4t2.5 3.5q1 2-1 5M627.5 82q2 2 1 4.5t2 3.5" stroke="#9fb6e6" stroke-width="1.4" fill="none"/>
<text text-anchor="middle" fill="#e2001a" style="font-family:&quot;Liberation Sans&quot;,sans-serif;font-size:3.3px;font-weight:bold"><tspan x="624.4" y="101.4" textLength="25" lengthAdjust="spacingAndGlyphs">AGENCE DE LA</tspan><tspan x="624.4" y="105.2" textLength="25" lengthAdjust="spacingAndGlyphs">TRANSITION</tspan><tspan x="624.4" y="109" textLength="25" lengthAdjust="spacingAndGlyphs">ÉCOLOGIQUE</tspan></text>
</g>
<!-- J table -->
<g id="jtable">
<use href="#wave" x="180.2" y="195"/>
<use href="#wave" x="302.1" y="196.3"/>
<use href="#wave" x="424" y="196.3"/>
<use href="#wave" x="544" y="196.3"/>
<path d="M169.3 135.4H660.6V258.5H169.3ZM172.9 139.1V189.2H289.2V139.1ZM294.4 139.1V189.2H411V139.1ZM416.4 139.1V189.2H533.2V139.1ZM538.6 139.1V189.2H655.1V139.1ZM172.9 193.9V253.6H289.2V193.9ZM294.4 193.9V253.6H411V193.9ZM416.4 193.9V253.6H533.2V193.9ZM538.6 193.9V253.6H655.1V193.9Z" fill="#dadada" fill-rule="evenodd"/>
<g class="jl" fill="#000">
<text class="ari" x="222.5" y="175.2" style="font-size:33px">J</text>
<text class="ari" y="175.2" style="font-size:33px"><tspan x="311.7">J</tspan><tspan x="344.2"> </tspan><tspan x="344.2">+</tspan><tspan x="363"> </tspan><tspan x="376.6">1</tspan></text>
<text class="ari" y="175.2" style="font-size:33px"><tspan x="434.6">J</tspan><tspan x="457"> </tspan><tspan x="466.4">+</tspan><tspan x="486"> </tspan><tspan x="499.3" font-weight="bold">2</tspan></text>
<text class="ari" y="175.2" style="font-size:33px"><tspan x="556.2">J</tspan><tspan x="579"> </tspan><tspan x="588.6">+</tspan><tspan x="608"> </tspan><tspan x="621.5" font-weight="bold">3</tspan></text>
</g>
</g>
<!-- site title -->
<path d="M1990.2 62H2406.4V91.9a6 6 0 0 1-6 6H1996.2a6 6 0 0 1-6-6Z" fill="#fff"/>
<text class="tahb" x="2198.5" y="88.7" text-anchor="middle" style="font-size:23.6px" textLength="172.5" lengthAdjust="spacingAndGlyphs">LHB-site-L05T</text>
<!-- labels -->
<g fill="#fff" stroke="#828282" stroke-width="3.1">
<rect x="1991.6" y="107.9" width="412.4" height="58" rx="9" ry="9"/>
<rect x="1991.6" y="178" width="412.4" height="58" rx="9" ry="9"/>
<rect x="1991.6" y="248.1" width="412.4" height="58" rx="9" ry="9"/>
</g>
<text class="tah" x="2208.1" y="148" text-anchor="middle" textLength="312" lengthAdjust="spacingAndGlyphs">Consommation: 255 kWh</text>
<text class="tah" x="2207.8" y="218.1" text-anchor="middle" textLength="189.5" lengthAdjust="spacingAndGlyphs" xml:space="preserve">P Max :  13 kW</text>
<text class="tah" x="2207.8" y="288.2" text-anchor="middle" textLength="160" lengthAdjust="spacingAndGlyphs">P min : 9 kW</text>
<!-- date -->
<rect x="1047.9" y="542.1" width="521.8" height="69.5" rx="10" ry="10" fill="#fff" fill-opacity=".93"/>
<text class="tahb" x="1314.2" y="588" text-anchor="middle" style="font-size:28.8px" textLength="355" lengthAdjust="spacingAndGlyphs">samedi 31 janvier 2026</text>

</svg>
<svg class="layer" id="chart2" viewBox="0 0 2511 1415">
<rect x="168.2" y="815.3" width="2248.2" height="505.2" fill="#fff"/>
<rect x="168.2" y="815.3" width="321.17" height="505.2" fill="#f0f0f0"/>
<rect x="810.54" y="815.3" width="321.17" height="505.2" fill="#f0f0f0"/>
<rect x="1452.89" y="815.3" width="321.17" height="505.2" fill="#f0f0f0"/>
<rect x="2095.23" y="815.3" width="321.17" height="505.2" fill="#f0f0f0"/>
<path d="M489.37 815.3V1320.5M810.54 815.3V1320.5M1131.71 815.3V1320.5M1452.89 815.3V1320.5M1774.06 815.3V1320.5M2095.23 815.3V1320.5" stroke="#b4b4b4" stroke-width="1.15" fill="none"/>
<rect x="168.2" y="865.82" width="2248.2" height="50.52" fill="#f0f0f0"/>
<rect x="168.2" y="966.86" width="2248.2" height="50.52" fill="#f0f0f0"/>
<rect x="168.2" y="1067.9" width="2248.2" height="50.52" fill="#f0f0f0"/>
<rect x="168.2" y="1168.94" width="2248.2" height="50.52" fill="#f0f0f0"/>
<rect x="168.2" y="1269.98" width="2248.2" height="50.52" fill="#f0f0f0"/>
<path d="M168.2 1320.5H2416.4M168.2 1269.98H2416.4M168.2 1219.46H2416.4M168.2 1168.94H2416.4M168.2 1118.42H2416.4M168.2 1067.9H2416.4M168.2 1017.38H2416.4M168.2 966.86H2416.4M168.2 916.34H2416.4M168.2 865.82H2416.4M168.2 815.3H2416.4" stroke="#b4b4b4" stroke-width="1.15" fill="none"/>
<path d="M168.6 1320.5V1259.88H169.22V1320.5ZM168.6 1320.5V1259.88H170.34V1320.5ZM169.41 1320.5V1264.93H171.46V1320.5ZM170.52 1320.5V1254.82H172.57V1320.5ZM171.64 1320.5V1264.93H173.69V1320.5ZM172.75 1320.5V1259.88H174.8V1320.5ZM173.87 1320.5V1254.82H175.92V1320.5ZM174.98 1320.5V1264.93H177.03V1320.5ZM176.1 1320.5V1254.82H178.15V1320.5ZM177.21 1320.5V1264.93H179.26V1320.5ZM178.33 1320.5V1254.82H180.38V1320.5ZM179.44 1320.5V1254.82H181.49V1320.5ZM180.56 1320.5V1264.93H182.61V1320.5ZM181.67 1320.5V1264.93H183.72V1320.5ZM182.79 1320.5V1259.88H184.84V1320.5ZM183.9 1320.5V1259.88H185.95V1320.5ZM185.02 1320.5V1264.93H187.07V1320.5ZM186.13 1320.5V1264.93H188.18V1320.5ZM187.25 1320.5V1264.93H189.3V1320.5ZM188.36 1320.5V1264.93H190.41V1320.5ZM189.48 1320.5V1264.93H191.53V1320.5ZM190.59 1320.5V1254.82H192.64V1320.5ZM191.71 1320.5V1264.93H193.76V1320.5ZM192.82 1320.5V1259.88H194.87V1320.5ZM193.94 1320.5V1259.88H195.99V1320.5ZM195.05 1320.5V1259.88H197.1V1320.5ZM196.17 1320.5V1259.88H198.22V1320.5ZM197.28 1320.5V1264.93H199.33V1320.5ZM198.4 1320.5V1259.88H200.45V1320.5ZM199.52 1320.5V1264.93H201.57V1320.5ZM200.63 1320.5V1264.93H202.68V1320.5ZM201.75 1320.5V1259.88H203.8V1320.5ZM202.86 1320.5V1264.93H204.91V1320.5ZM203.98 1320.5V1254.82H206.03V1320.5ZM205.09 1320.5V1254.82H207.14V1320.5ZM206.21 1320.5V1259.88H208.26V1320.5ZM207.32 1320.5V1264.93H209.37V1320.5ZM208.44 1320.5V1264.93H210.49V1320.5ZM209.55 1320.5V1259.88H211.6V1320.5ZM210.67 1320.5V1264.93H212.72V1320.5ZM211.78 1320.5V1264.93H213.83V1320.5ZM212.9 1320.5V1259.88H214.95V1320.5ZM214.01 1320.5V1264.93H216.06V1320.5ZM215.13 1320.5V1264.93H217.18V1320.5ZM216.24 1320.5V1259.88H218.29V1320.5ZM217.36 1320.5V1264.93H219.41V1320.5ZM218.47 1320.5V1264.93H220.52V1320.5ZM219.59 1320.5V1264.93H221.64V1320.5ZM220.7 1320.5V1264.93H222.75V1320.5ZM221.82 1320.5V1259.88H223.87V1320.5ZM222.93 1320.5V1264.93H224.98V1320.5ZM224.05 1320.5V1259.88H226.1V1320.5ZM225.16 1320.5V1264.93H227.21V1320.5ZM226.28 1320.5V1264.93H228.33V1320.5ZM227.39 1320.5V1259.88H229.44V1320.5ZM228.51 1320.5V1264.93H230.56V1320.5ZM229.62 1320.5V1254.82H231.68V1320.5ZM230.74 1320.5V1264.93H232.79V1320.5ZM231.86 1320.5V1264.93H233.91V1320.5ZM232.97 1320.5V1264.93H235.02V1320.5ZM234.09 1320.5V1264.93H236.14V1320.5ZM235.2 1320.5V1259.88H237.25V1320.5ZM236.32 1320.5V1264.93H238.37V1320.5ZM237.43 1320.5V1264.93H239.48V1320.5ZM238.55 1320.5V1264.93H240.6V1320.5ZM239.66 1320.5V1264.93H241.71V1320.5ZM240.78 1320.5V1264.93H242.83V1320.5ZM241.89 1320.5V1264.93H243.94V1320.5ZM243.01 1320.5V1264.93H245.06V1320.5ZM244.12 1320.5V1264.93H246.17V1320.5ZM245.24 1320.5V1254.82H247.29V1320.5ZM246.35 1320.5V1264.93H248.4V1320.5ZM247.47 1320.5V1264.93H249.52V1320.5ZM248.58 1320.5V1264.93H250.63V1320.5ZM249.7 1320.5V1264.93H251.75V1320.5ZM250.81 1320.5V1259.88H252.86V1320.5ZM251.93 1320.5V1264.93H253.98V1320.5ZM253.04 1320.5V1264.93H255.09V1320.5ZM254.16 1320.5V1254.82H256.21V1320.5ZM255.27 1320.5V1264.93H257.32V1320.5ZM256.39 1320.5V1259.88H258.44V1320.5ZM257.5 1320.5V1259.88H259.55V1320.5ZM258.62 1320.5V1254.82H260.67V1320.5ZM259.73 1320.5V1264.93H261.78V1320.5ZM260.85 1320.5V1259.88H262.9V1320.5ZM261.97 1320.5V1259.88H264.02V1320.5ZM263.08 1320.5V1264.93H265.13V1320.5ZM264.2 1320.5V1264.93H266.25V1320.5ZM265.31 1320.5V1254.82H267.36V1320.5ZM266.43 1320.5V1264.93H268.48V1320.5ZM267.54 1320.5V1264.93H269.59V1320.5ZM268.66 1320.5V1264.93H270.71V1320.5ZM269.77 1320.5V1264.93H271.82V1320.5ZM270.89 1320.5V1264.93H272.94V1320.5ZM272 1320.5V1259.88H274.05V1320.5ZM273.12 1320.5V1264.93H275.17V1320.5ZM274.23 1320.5V1259.88H276.28V1320.5ZM275.35 1320.5V1264.93H277.4V1320.5ZM276.46 1320.5V1264.93H278.51V1320.5ZM277.58 1320.5V1259.88H279.63V1320.5ZM278.69 1320.5V1259.88H280.74V1320.5ZM279.81 1320.5V1259.88H281.86V1320.5ZM280.92 1320.5V1259.88H282.97V1320.5ZM282.04 1320.5V1264.93H284.09V1320.5ZM283.15 1320.5V1264.93H285.2V1320.5ZM284.27 1320.5V1259.88H286.32V1320.5ZM285.38 1320.5V1249.77H287.43V1320.5ZM286.5 1320.5V1264.93H288.55V1320.5ZM287.61 1320.5V1259.88H289.66V1320.5ZM288.73 1320.5V1264.93H290.78V1320.5ZM289.84 1320.5V1264.93H291.89V1320.5ZM290.96 1320.5V1264.93H293.01V1320.5ZM292.08 1320.5V1264.93H294.12V1320.5ZM293.19 1320.5V1264.93H295.24V1320.5ZM294.31 1320.5V1264.93H296.36V1320.5ZM295.42 1320.5V1254.82H297.47V1320.5ZM296.54 1320.5V1264.93H298.59V1320.5ZM297.65 1320.5V1264.93H299.7V1320.5ZM298.77 1320.5V1264.93H300.82V1320.5ZM299.88 1320.5V1264.93H301.93V1320.5ZM301 1320.5V1264.93H303.05V1320.5ZM302.11 1320.5V1264.93H304.16V1320.5ZM303.23 1320.5V1254.82H305.28V1320.5ZM304.34 1320.5V1264.93H306.39V1320.5ZM305.46 1320.5V1254.82H307.51V1320.5ZM306.57 1320.5V1254.82H308.62V1320.5ZM307.69 1320.5V1259.88H309.74V1320.5ZM308.8 1320.5V1259.88H310.85V1320.5ZM309.92 1320.5V1259.88H311.97V1320.5ZM311.03 1320.5V1254.82H313.08V1320.5ZM312.15 1320.5V1249.77H314.2V1320.5ZM313.26 1320.5V1259.88H315.31V1320.5ZM314.38 1320.5V1254.82H316.43V1320.5ZM315.49 1320.5V1259.88H317.54V1320.5ZM316.61 1320.5V1254.82H318.66V1320.5ZM317.72 1320.5V1264.93H319.77V1320.5ZM318.84 1320.5V1264.93H320.89V1320.5ZM319.95 1320.5V1259.88H322V1320.5ZM321.07 1320.5V1259.88H323.12V1320.5ZM322.18 1320.5V1259.88H324.23V1320.5ZM323.3 1320.5V1259.88H325.35V1320.5ZM324.42 1320.5V1259.88H326.47V1320.5ZM325.53 1320.5V1264.93H327.58V1320.5ZM326.65 1320.5V1264.93H328.7V1320.5ZM327.76 1320.5V1264.93H329.81V1320.5ZM328.88 1320.5V1264.93H330.93V1320.5ZM329.99 1320.5V1254.82H332.04V1320.5ZM331.11 1320.5V1254.82H333.16V1320.5ZM332.22 1320.5V1259.88H334.27V1320.5ZM333.34 1320.5V1259.88H335.39V1320.5ZM334.45 1320.5V1264.93H336.5V1320.5ZM335.57 1320.5V1259.88H337.62V1320.5ZM336.68 1320.5V1254.82H338.73V1320.5ZM337.8 1320.5V1264.93H339.85V1320.5ZM338.91 1320.5V1264.93H340.96V1320.5ZM340.03 1320.5V1259.88H342.08V1320.5ZM341.14 1320.5V1264.93H343.19V1320.5ZM342.26 1320.5V1254.82H344.31V1320.5ZM343.37 1320.5V1264.93H345.42V1320.5ZM344.49 1320.5V1264.93H346.54V1320.5ZM345.6 1320.5V1264.93H347.65V1320.5ZM346.72 1320.5V1264.93H348.77V1320.5ZM347.83 1320.5V1259.88H349.88V1320.5ZM348.95 1320.5V1259.88H351V1320.5ZM350.06 1320.5V1259.88H352.11V1320.5ZM351.18 1320.5V1264.93H353.23V1320.5ZM352.29 1320.5V1264.93H354.34V1320.5ZM353.41 1320.5V1264.93H355.46V1320.5ZM354.53 1320.5V1259.88H356.57V1320.5ZM355.64 1320.5V1259.88H357.69V1320.5ZM356.76 1320.5V1264.93H358.81V1320.5ZM357.87 1320.5V1264.93H359.92V1320.5ZM358.99 1320.5V1264.93H361.04V1320.5ZM360.1 1320.5V1264.93H362.15V1320.5ZM361.22 1320.5V1264.93H363.27V1320.5ZM362.33 1320.5V1264.93H364.38V1320.5ZM363.45 1320.5V1259.88H365.5V1320.5ZM364.56 1320.5V1264.93H366.61V1320.5ZM365.68 1320.5V1259.88H367.73V1320.5ZM366.79 1320.5V1254.82H368.84V1320.5ZM367.91 1320.5V1254.82H369.96V1320.5ZM369.02 1320.5V1259.88H371.07V1320.5ZM370.14 1320.5V1259.88H372.19V1320.5ZM371.25 1320.5V1264.93H373.3V1320.5ZM372.37 1320.5V1264.93H374.42V1320.5ZM373.48 1320.5V1264.93H375.53V1320.5ZM374.6 1320.5V1264.93H376.65V1320.5ZM375.71 1320.5V1264.93H377.76V1320.5ZM376.83 1320.5V1264.93H378.88V1320.5ZM377.94 1320.5V1259.88H379.99V1320.5ZM379.06 1320.5V1259.88H381.11V1320.5ZM380.17 1320.5V1259.88H382.22V1320.5ZM381.29 1320.5V1259.88H383.34V1320.5ZM382.4 1320.5V1259.88H384.45V1320.5ZM383.52 1320.5V1264.93H385.57V1320.5ZM384.63 1320.5V1264.93H386.68V1320.5ZM385.75 1320.5V1264.93H387.8V1320.5ZM386.87 1320.5V1264.93H388.92V1320.5ZM387.98 1320.5V1264.93H390.03V1320.5ZM389.1 1320.5V1264.93H391.15V1320.5ZM390.21 1320.5V1254.82H392.26V1320.5ZM391.33 1320.5V1264.93H393.38V1320.5ZM392.44 1320.5V1264.93H394.49V1320.5ZM393.56 1320.5V1264.93H395.61V1320.5ZM394.67 1320.5V1264.93H396.72V1320.5ZM395.79 1320.5V1264.93H397.84V1320.5ZM396.9 1320.5V1259.88H398.95V1320.5ZM398.02 1320.5V1264.93H400.07V1320.5ZM399.13 1320.5V1259.88H401.18V1320.5ZM400.25 1320.5V1264.93H402.3V1320.5ZM401.36 1320.5V1264.93H403.41V1320.5ZM402.48 1320.5V1264.93H404.53V1320.5ZM403.59 1320.5V1264.93H405.64V1320.5ZM404.71 1320.5V1264.93H406.76V1320.5ZM405.82 1320.5V1264.93H407.87V1320.5ZM406.94 1320.5V1259.88H408.99V1320.5ZM408.05 1320.5V1259.88H410.1V1320.5ZM409.17 1320.5V1259.88H411.22V1320.5ZM410.28 1320.5V1264.93H412.33V1320.5ZM411.4 1320.5V1264.93H413.45V1320.5ZM412.51 1320.5V1259.88H414.56V1320.5ZM413.63 1320.5V1264.93H415.68V1320.5ZM414.74 1320.5V1264.93H416.79V1320.5ZM415.86 1320.5V1264.93H417.91V1320.5ZM416.98 1320.5V1259.88H419.02V1320.5ZM418.09 1320.5V1264.93H420.14V1320.5ZM419.21 1320.5V1259.88H421.26V1320.5ZM420.32 1320.5V1254.82H422.37V1320.5ZM421.44 1320.5V1264.93H423.49V1320.5ZM422.55 1320.5V1264.93H424.6V1320.5ZM423.67 1320.5V1264.93H425.72V1320.5ZM424.78 1320.5V1264.93H426.83V1320.5ZM425.9 1320.5V1264.93H427.95V1320.5ZM427.01 1320.5V1264.93H429.06V1320.5ZM428.13 1320.5V1264.93H430.18V1320.5ZM429.24 1320.5V1259.88H431.29V1320.5ZM430.36 1320.5V1259.88H432.41V1320.5ZM431.47 1320.5V1259.88H433.52V1320.5ZM432.59 1320.5V1259.88H434.64V1320.5ZM433.7 1320.5V1264.93H435.75V1320.5ZM434.82 1320.5V1259.88H436.87V1320.5ZM435.93 1320.5V1264.93H437.98V1320.5ZM437.05 1320.5V1259.88H439.1V1320.5ZM438.16 1320.5V1264.93H440.21V1320.5ZM439.28 1320.5V1259.88H441.33V1320.5ZM440.39 1320.5V1264.93H442.44V1320.5ZM441.51 1320.5V1264.93H443.56V1320.5ZM442.62 1320.5V1264.93H444.67V1320.5ZM443.74 1320.5V1264.93H445.79V1320.5ZM444.85 1320.5V1264.93H446.9V1320.5ZM445.97 1320.5V1264.93H448.02V1320.5ZM447.08 1320.5V1264.93H449.13V1320.5ZM448.2 1320.5V1264.93H450.25V1320.5ZM449.32 1320.5V1254.82H451.37V1320.5ZM450.43 1320.5V1264.93H452.48V1320.5ZM451.55 1320.5V1259.88H453.6V1320.5ZM452.66 1320.5V1249.77H454.71V1320.5ZM453.78 1320.5V1264.93H455.83V1320.5ZM454.89 1320.5V1259.88H456.94V1320.5ZM456.01 1320.5V1264.93H458.06V1320.5ZM457.12 1320.5V1264.93H459.17V1320.5ZM458.24 1320.5V1264.93H460.29V1320.5ZM459.35 1320.5V1259.88H461.4V1320.5ZM460.47 1320.5V1264.93H462.52V1320.5ZM461.58 1320.5V1264.93H463.63V1320.5ZM462.7 1320.5V1264.93H464.75V1320.5ZM463.81 1320.5V1254.82H465.86V1320.5ZM464.93 1320.5V1264.93H466.98V1320.5ZM466.04 1320.5V1259.88H468.09V1320.5ZM467.16 1320.5V1259.88H469.21V1320.5ZM468.27 1320.5V1264.93H470.32V1320.5ZM469.39 1320.5V1264.93H471.44V1320.5ZM470.5 1320.5V1264.93H472.55V1320.5ZM471.62 1320.5V1264.93H473.67V1320.5ZM472.73 1320.5V1264.93H474.78V1320.5ZM473.85 1320.5V1264.93H475.9V1320.5ZM474.96 1320.5V1264.93H477.01V1320.5ZM476.08 1320.5V1264.93H478.13V1320.5ZM477.19 1320.5V1264.93H479.24V1320.5ZM478.31 1320.5V1264.93H480.36V1320.5ZM479.43 1320.5V1264.93H481.48V1320.5ZM480.54 1320.5V1264.93H482.59V1320.5ZM481.66 1320.5V1264.93H483.71V1320.5ZM482.77 1320.5V1264.93H484.82V1320.5ZM483.89 1320.5V1264.93H485.94V1320.5ZM485 1320.5V1264.93H487.05V1320.5ZM486.12 1320.5V1264.93H488.17V1320.5ZM487.23 1320.5V1259.88H489.28V1320.5ZM488.35 1320.5V1264.93H490.4V1320.5ZM489.46 1320.5V1264.93H491.51V1320.5ZM490.58 1320.5V1264.93H492.63V1320.5ZM491.69 1320.5V1259.88H493.74V1320.5ZM492.81 1320.5V1259.88H494.86V1320.5ZM493.92 1320.5V1264.93H495.97V1320.5ZM495.04 1320.5V1254.82H497.09V1320.5ZM496.15 1320.5V1259.88H498.2V1320.5ZM497.27 1320.5V1254.82H499.32V1320.5ZM498.38 1320.5V1264.93H500.43V1320.5ZM499.5 1320.5V1264.93H501.55V1320.5ZM500.61 1320.5V1264.93H502.66V1320.5ZM501.73 1320.5V1259.88H503.78V1320.5ZM502.84 1320.5V1264.93H504.89V1320.5ZM503.96 1320.5V1264.93H506.01V1320.5ZM505.07 1320.5V1259.88H507.12V1320.5ZM506.19 1320.5V1264.93H508.24V1320.5ZM507.3 1320.5V1264.93H509.35V1320.5ZM508.42 1320.5V1259.88H510.47V1320.5ZM509.53 1320.5V1264.93H511.58V1320.5ZM510.65 1320.5V1264.93H512.7V1320.5ZM511.77 1320.5V1264.93H513.82V1320.5ZM512.88 1320.5V1264.93H514.93V1320.5ZM514 1320.5V1264.93H516.05V1320.5ZM515.11 1320.5V1259.88H517.16V1320.5ZM516.23 1320.5V1264.93H518.28V1320.5ZM517.34 1320.5V1264.93H519.39V1320.5ZM518.46 1320.5V1259.88H520.51V1320.5ZM519.57 1320.5V1259.88H521.62V1320.5ZM520.69 1320.5V1259.88H522.74V1320.5ZM521.8 1320.5V1264.93H523.85V1320.5ZM522.92 1320.5V1254.82H524.97V1320.5ZM524.03 1320.5V1264.93H526.08V1320.5ZM525.15 1320.5V1264.93H527.2V1320.5ZM526.26 1320.5V1254.82H528.31V1320.5ZM527.38 1320.5V1259.88H529.43V1320.5ZM528.49 1320.5V1264.93H530.54V1320.5ZM529.61 1320.5V1264.93H531.66V1320.5ZM530.72 1320.5V1254.82H532.77V1320.5ZM531.84 1320.5V1264.93H533.89V1320.5ZM532.95 1320.5V1264.93H535V1320.5ZM534.07 1320.5V1264.93H536.12V1320.5ZM535.18 1320.5V1254.82H537.23V1320.5ZM536.3 1320.5V1259.88H538.35V1320.5ZM537.41 1320.5V1254.82H539.46V1320.5ZM538.53 1320.5V1264.93H540.58V1320.5ZM539.64 1320.5V1259.88H541.69V1320.5ZM540.76 1320.5V1259.88H542.81V1320.5ZM541.88 1320.5V1264.93H543.93V1320.5ZM542.99 1320.5V1264.93H545.04V1320.5ZM544.11 1320.5V1264.93H546.16V1320.5ZM545.22 1320.5V1259.88H547.27V1320.5ZM546.34 1320.5V1259.88H548.39V1320.5ZM547.45 1320.5V1264.93H549.5V1320.5ZM548.57 1320.5V1264.93H550.62V1320.5ZM549.68 1320.5V1264.93H551.73V1320.5ZM550.8 1320.5V1254.82H552.85V1320.5ZM551.91 1320.5V1254.82H553.96V1320.5ZM553.03 1320.5V1264.93H555.08V1320.5ZM554.14 1320.5V1264.93H556.19V1320.5ZM555.26 1320.5V1254.82H557.31V1320.5ZM556.37 1320.5V1264.93H558.42V1320.5ZM557.49 1320.5V1264.93H559.54V1320.5ZM558.6 1320.5V1264.93H560.65V1320.5ZM559.72 1320.5V1254.82H561.77V1320.5ZM560.83 1320.5V1264.93H562.88V1320.5ZM561.95 1320.5V1254.82H564V1320.5ZM563.06 1320.5V1264.93H565.11V1320.5ZM564.18 1320.5V1264.93H566.23V1320.5ZM565.29 1320.5V1259.88H567.34V1320.5ZM566.41 1320.5V1264.93H568.46V1320.5ZM567.52 1320.5V1264.93H569.57V1320.5ZM568.64 1320.5V1259.88H570.69V1320.5ZM715.84 1320.5V1264.93H717.89V1320.5ZM716.96 1320.5V1264.93H719.01V1320.5ZM718.07 1320.5V1264.93H720.12V1320.5ZM719.19 1320.5V1264.93H721.24V1320.5ZM720.3 1320.5V1264.93H722.35V1320.5ZM721.42 1320.5V1254.82H723.47V1320.5ZM722.53 1320.5V1259.88H724.58V1320.5ZM723.65 1320.5V1259.88H725.7V1320.5ZM724.76 1320.5V1264.93H726.81V1320.5ZM725.88 1320.5V1259.88H727.93V1320.5ZM726.99 1320.5V1264.93H729.04V1320.5ZM728.11 1320.5V1254.82H730.16V1320.5ZM729.23 1320.5V1254.82H731.27V1320.5ZM730.34 1320.5V1259.88H732.39V1320.5ZM731.46 1320.5V1264.93H733.51V1320.5ZM732.57 1320.5V1264.93H734.62V1320.5ZM733.69 1320.5V1264.93H735.74V1320.5ZM734.8 1320.5V1259.88H736.85V1320.5ZM735.92 1320.5V1264.93H737.97V1320.5ZM737.03 1320.5V1264.93H739.08V1320.5ZM738.15 1320.5V1264.93H740.2V1320.5ZM739.26 1320.5V1259.88H741.31V1320.5ZM740.38 1320.5V1264.93H742.43V1320.5ZM741.49 1320.5V1259.88H743.54V1320.5ZM742.61 1320.5V1264.93H744.66V1320.5ZM743.72 1320.5V1264.93H745.77V1320.5ZM744.84 1320.5V1254.82H746.89V1320.5ZM745.95 1320.5V1264.93H748V1320.5ZM747.07 1320.5V1264.93H749.12V1320.5ZM748.18 1320.5V1264.93H750.23V1320.5ZM749.3 1320.5V1264.93H751.35V1320.5ZM750.41 1320.5V1259.88H752.46V1320.5ZM751.53 1320.5V1259.88H753.58V1320.5ZM752.64 1320.5V1264.93H754.69V1320.5ZM753.76 1320.5V1259.88H755.81V1320.5ZM754.87 1320.5V1264.93H756.92V1320.5ZM755.99 1320.5V1259.88H758.04V1320.5ZM757.1 1320.5V1264.93H759.15V1320.5ZM758.22 1320.5V1264.93H760.27V1320.5ZM759.33 1320.5V1259.88H761.38V1320.5ZM760.45 1320.5V1264.93H762.5V1320.5ZM761.57 1320.5V1264.93H763.62V1320.5ZM762.68 1320.5V1264.93H764.73V1320.5ZM763.8 1320.5V1264.93H765.85V1320.5ZM764.91 1320.5V1259.88H766.96V1320.5ZM766.03 1320.5V1264.93H768.08V1320.5ZM767.14 1320.5V1264.93H769.19V1320.5ZM768.26 1320.5V1254.82H770.31V1320.5ZM769.37 1320.5V1249.77H771.42V1320.5ZM770.49 1320.5V1264.93H772.54V1320.5ZM771.6 1320.5V1264.93H773.65V1320.5ZM772.72 1320.5V1259.88H774.77V1320.5ZM773.83 1320.5V1259.88H775.88V1320.5ZM774.95 1320.5V1259.88H777V1320.5ZM776.06 1320.5V1259.88H778.11V1320.5ZM777.18 1320.5V1264.93H779.23V1320.5ZM778.29 1320.5V1249.77H780.34V1320.5ZM779.41 1320.5V1264.93H781.46V1320.5ZM780.52 1320.5V1264.93H782.57V1320.5ZM781.64 1320.5V1259.88H783.69V1320.5ZM782.75 1320.5V1264.93H784.8V1320.5ZM783.87 1320.5V1264.93H785.92V1320.5ZM784.98 1320.5V1264.93H787.03V1320.5ZM786.1 1320.5V1259.88H788.15V1320.5ZM787.21 1320.5V1259.88H789.26V1320.5ZM788.33 1320.5V1264.93H790.38V1320.5ZM789.44 1320.5V1264.93H791.49V1320.5ZM790.56 1320.5V1264.93H792.61V1320.5ZM791.68 1320.5V1259.88H793.73V1320.5ZM792.79 1320.5V1264.93H794.84V1320.5ZM793.91 1320.5V1259.88H795.96V1320.5ZM795.02 1320.5V1254.82H797.07V1320.5ZM796.14 1320.5V1254.82H798.19V1320.5ZM797.25 1320.5V1264.93H799.3V1320.5ZM798.37 1320.5V1259.88H800.42V1320.5ZM799.48 1320.5V1264.93H801.53V1320.5ZM800.6 1320.5V1259.88H802.65V1320.5ZM801.71 1320.5V1259.88H803.76V1320.5ZM802.83 1320.5V1264.93H804.88V1320.5ZM803.94 1320.5V1259.88H805.99V1320.5ZM805.06 1320.5V1259.88H807.11V1320.5ZM806.17 1320.5V1264.93H808.22V1320.5ZM807.29 1320.5V1264.93H809.34V1320.5ZM808.4 1320.5V1264.93H810.45V1320.5ZM809.52 1320.5V1264.93H811.57V1320.5ZM810.63 1320.5V1264.93H812.68V1320.5ZM811.75 1320.5V1264.93H813.8V1320.5ZM812.86 1320.5V1264.93H814.91V1320.5ZM813.98 1320.5V1264.93H816.03V1320.5ZM815.09 1320.5V1254.82H817.14V1320.5ZM816.21 1320.5V1264.93H818.26V1320.5ZM817.32 1320.5V1264.93H819.37V1320.5ZM818.44 1320.5V1264.93H820.49V1320.5ZM819.55 1320.5V1264.93H821.6V1320.5ZM820.67 1320.5V1259.88H822.72V1320.5ZM821.78 1320.5V1254.82H823.83V1320.5ZM822.9 1320.5V1264.93H824.95V1320.5ZM824.02 1320.5V1259.88H826.07V1320.5ZM825.13 1320.5V1264.93H827.18V1320.5ZM826.25 1320.5V1259.88H828.3V1320.5ZM827.36 1320.5V1259.88H829.41V1320.5ZM828.48 1320.5V1264.93H830.53V1320.5ZM829.59 1320.5V1264.93H831.64V1320.5ZM830.71 1320.5V1259.88H832.76V1320.5ZM831.82 1320.5V1264.93H833.87V1320.5ZM832.94 1320.5V1259.88H834.99V1320.5ZM834.05 1320.5V1264.93H836.1V1320.5ZM835.17 1320.5V1264.93H837.22V1320.5ZM836.28 1320.5V1259.88H838.33V1320.5ZM837.4 1320.5V1259.88H839.45V1320.5ZM838.51 1320.5V1259.88H840.56V1320.5ZM839.63 1320.5V1264.93H841.68V1320.5ZM840.74 1320.5V1264.93H842.79V1320.5ZM841.86 1320.5V1259.88H843.91V1320.5ZM842.97 1320.5V1264.93H845.02V1320.5ZM844.09 1320.5V1264.93H846.14V1320.5ZM845.2 1320.5V1264.93H847.25V1320.5ZM846.32 1320.5V1259.88H848.37V1320.5ZM847.43 1320.5V1259.88H849.48V1320.5ZM848.55 1320.5V1254.82H850.6V1320.5ZM849.66 1320.5V1259.88H851.71V1320.5ZM850.78 1320.5V1254.82H852.83V1320.5ZM851.89 1320.5V1259.88H853.94V1320.5ZM853.01 1320.5V1259.88H855.06V1320.5ZM854.13 1320.5V1264.93H856.18V1320.5ZM855.24 1320.5V1264.93H857.29V1320.5ZM856.36 1320.5V1264.93H858.41V1320.5ZM857.47 1320.5V1264.93H859.52V1320.5ZM858.59 1320.5V1264.93H860.64V1320.5ZM859.7 1320.5V1264.93H861.75V1320.5ZM860.82 1320.5V1259.88H862.87V1320.5ZM861.93 1320.5V1259.88H863.98V1320.5ZM863.05 1320.5V1254.82H865.1V1320.5ZM864.16 1320.5V1259.88H866.21V1320.5ZM865.28 1320.5V1264.93H867.33V1320.5ZM866.39 1320.5V1259.88H868.44V1320.5ZM867.51 1320.5V1264.93H869.56V1320.5ZM868.62 1320.5V1264.93H870.67V1320.5ZM869.74 1320.5V1264.93H871.79V1320.5ZM870.85 1320.5V1259.88H872.9V1320.5ZM871.97 1320.5V1259.88H874.02V1320.5ZM873.08 1320.5V1259.88H875.13V1320.5ZM874.2 1320.5V1264.93H876.25V1320.5ZM875.31 1320.5V1264.93H877.36V1320.5ZM876.43 1320.5V1264.93H878.48V1320.5ZM877.54 1320.5V1264.93H879.59V1320.5ZM878.66 1320.5V1264.93H880.71V1320.5ZM879.77 1320.5V1254.82H881.82V1320.5ZM880.89 1320.5V1254.82H882.94V1320.5ZM882 1320.5V1264.93H884.05V1320.5ZM883.12 1320.5V1264.93H885.17V1320.5ZM884.23 1320.5V1264.93H886.28V1320.5ZM885.35 1320.5V1264.93H887.4V1320.5ZM886.47 1320.5V1249.77H888.52V1320.5ZM887.58 1320.5V1264.93H889.63V1320.5ZM888.7 1320.5V1264.93H890.75V1320.5ZM889.81 1320.5V1264.93H891.86V1320.5ZM1037.01 1320.5V1259.88H1039.06V1320.5ZM1038.13 1320.5V1259.88H1040.18V1320.5ZM1039.24 1320.5V1249.77H1041.29V1320.5ZM1040.36 1320.5V1264.93H1042.41V1320.5ZM1041.47 1320.5V1264.93H1043.53V1320.5ZM1042.59 1320.5V1264.93H1044.64V1320.5ZM1043.71 1320.5V1264.93H1045.76V1320.5ZM1044.82 1320.5V1254.82H1046.87V1320.5ZM1045.94 1320.5V1259.88H1047.99V1320.5ZM1047.05 1320.5V1264.93H1049.1V1320.5ZM1048.17 1320.5V1264.93H1050.22V1320.5ZM1049.28 1320.5V1264.93H1051.33V1320.5ZM1050.4 1320.5V1264.93H1052.45V1320.5ZM1051.51 1320.5V1259.88H1053.56V1320.5ZM1052.63 1320.5V1264.93H1054.68V1320.5ZM1053.74 1320.5V1264.93H1055.79V1320.5ZM1054.86 1320.5V1264.93H1056.91V1320.5ZM1055.97 1320.5V1259.88H1058.02V1320.5ZM1057.09 1320.5V1264.93H1059.14V1320.5ZM1058.2 1320.5V1264.93H1060.25V1320.5ZM1059.32 1320.5V1264.93H1061.37V1320.5ZM1060.43 1320.5V1264.93H1062.48V1320.5ZM1061.55 1320.5V1264.93H1063.6V1320.5ZM1062.66 1320.5V1259.88H1064.71V1320.5ZM1063.78 1320.5V1259.88H1065.83V1320.5ZM1064.89 1320.5V1259.88H1066.94V1320.5ZM1066.01 1320.5V1264.93H1068.06V1320.5ZM1067.12 1320.5V1254.82H1069.17V1320.5ZM1068.24 1320.5V1259.88H1070.29V1320.5ZM1069.35 1320.5V1264.93H1071.4V1320.5ZM1070.47 1320.5V1259.88H1072.52V1320.5ZM1071.58 1320.5V1254.82H1073.63V1320.5ZM1072.7 1320.5V1254.82H1074.75V1320.5ZM1073.82 1320.5V1264.93H1075.87V1320.5ZM1074.93 1320.5V1259.88H1076.98V1320.5ZM1076.05 1320.5V1264.93H1078.1V1320.5ZM1077.16 1320.5V1264.93H1079.21V1320.5ZM1078.28 1320.5V1264.93H1080.33V1320.5ZM1079.39 1320.5V1259.88H1081.44V1320.5ZM1080.51 1320.5V1254.82H1082.56V1320.5ZM1081.62 1320.5V1254.82H1083.67V1320.5ZM1082.74 1320.5V1264.93H1084.79V1320.5ZM1083.85 1320.5V1264.93H1085.9V1320.5ZM1084.97 1320.5V1264.93H1087.02V1320.5ZM1086.08 1320.5V1259.88H1088.13V1320.5ZM1087.2 1320.5V1264.93H1089.25V1320.5ZM1088.31 1320.5V1264.93H1090.36V1320.5ZM1089.43 1320.5V1264.93H1091.48V1320.5ZM1090.54 1320.5V1264.93H1092.59V1320.5ZM1091.66 1320.5V1264.93H1093.71V1320.5ZM1092.77 1320.5V1264.93H1094.82V1320.5ZM1093.89 1320.5V1259.88H1095.94V1320.5ZM1095 1320.5V1264.93H1097.05V1320.5ZM1096.12 1320.5V1259.88H1098.17V1320.5ZM1097.23 1320.5V1264.93H1099.28V1320.5ZM1098.35 1320.5V1259.88H1100.4V1320.5ZM1099.46 1320.5V1264.93H1101.51V1320.5ZM1100.58 1320.5V1259.88H1102.63V1320.5ZM1101.69 1320.5V1259.88H1103.74V1320.5ZM1102.81 1320.5V1259.88H1104.86V1320.5ZM1103.92 1320.5V1259.88H1105.98V1320.5ZM1105.04 1320.5V1264.93H1107.09V1320.5ZM1106.16 1320.5V1264.93H1108.21V1320.5ZM1107.27 1320.5V1259.88H1109.32V1320.5ZM1108.39 1320.5V1264.93H1110.44V1320.5ZM1109.5 1320.5V1264.93H1111.55V1320.5ZM1110.62 1320.5V1264.93H1112.67V1320.5ZM1111.73 1320.5V1259.88H1113.78V1320.5ZM1112.85 1320.5V1264.93H1114.9V1320.5ZM1113.96 1320.5V1264.93H1116.01V1320.5ZM1115.08 1320.5V1264.93H1117.13V1320.5ZM1116.19 1320.5V1254.82H1118.24V1320.5ZM1117.31 1320.5V1264.93H1119.36V1320.5ZM1118.42 1320.5V1264.93H1120.47V1320.5ZM1119.54 1320.5V1264.93H1121.59V1320.5ZM1120.65 1320.5V1264.93H1122.7V1320.5ZM1121.77 1320.5V1254.82H1123.82V1320.5ZM1122.88 1320.5V1259.88H1124.93V1320.5ZM1124 1320.5V1259.88H1126.05V1320.5ZM1125.11 1320.5V1259.88H1127.16V1320.5ZM1126.23 1320.5V1264.93H1128.28V1320.5ZM1127.34 1320.5V1264.93H1129.39V1320.5ZM1128.46 1320.5V1264.93H1130.51V1320.5ZM1129.57 1320.5V1259.88H1131.62V1320.5ZM1130.69 1320.5V1264.93H1132.74V1320.5ZM1131.8 1320.5V1264.93H1133.85V1320.5ZM1132.92 1320.5V1259.88H1134.97V1320.5ZM1134.03 1320.5V1264.93H1136.08V1320.5ZM1135.15 1320.5V1264.93H1137.2V1320.5ZM1136.27 1320.5V1254.82H1138.32V1320.5ZM1137.38 1320.5V1264.93H1139.43V1320.5ZM1138.5 1320.5V1264.93H1140.55V1320.5ZM1139.61 1320.5V1259.88H1141.66V1320.5ZM1140.73 1320.5V1259.88H1142.78V1320.5ZM1141.84 1320.5V1259.88H1143.89V1320.5ZM1142.96 1320.5V1259.88H1145.01V1320.5ZM1144.07 1320.5V1259.88H1146.12V1320.5ZM1145.19 1320.5V1264.93H1147.24V1320.5ZM1146.3 1320.5V1264.93H1148.35V1320.5ZM1147.42 1320.5V1259.88H1149.47V1320.5ZM1148.53 1320.5V1249.77H1150.58V1320.5ZM1149.65 1320.5V1259.88H1151.7V1320.5ZM1150.76 1320.5V1264.93H1152.81V1320.5ZM1151.88 1320.5V1259.88H1153.93V1320.5ZM1152.99 1320.5V1259.88H1155.04V1320.5ZM1154.11 1320.5V1259.88H1156.16V1320.5ZM1155.22 1320.5V1264.93H1157.27V1320.5ZM1156.34 1320.5V1264.93H1158.39V1320.5ZM1157.45 1320.5V1254.82H1159.5V1320.5ZM1158.57 1320.5V1254.82H1160.62V1320.5ZM1159.68 1320.5V1264.93H1161.73V1320.5ZM1160.8 1320.5V1264.93H1162.85V1320.5ZM1161.91 1320.5V1264.93H1163.96V1320.5ZM1163.03 1320.5V1254.82H1165.08V1320.5ZM1164.14 1320.5V1259.88H1166.19V1320.5ZM1165.26 1320.5V1264.93H1167.31V1320.5ZM1166.38 1320.5V1264.93H1168.43V1320.5ZM1167.49 1320.5V1259.88H1169.54V1320.5ZM1168.61 1320.5V1259.88H1170.66V1320.5ZM1169.72 1320.5V1264.93H1171.77V1320.5ZM1170.84 1320.5V1259.88H1172.89V1320.5ZM1171.95 1320.5V1264.93H1174V1320.5ZM1173.07 1320.5V1259.88H1175.12V1320.5ZM1174.18 1320.5V1264.93H1176.23V1320.5ZM1175.3 1320.5V1264.93H1177.35V1320.5ZM1176.41 1320.5V1264.93H1178.46V1320.5ZM1177.53 1320.5V1259.88H1179.58V1320.5ZM1178.64 1320.5V1259.88H1180.69V1320.5ZM1179.76 1320.5V1264.93H1181.81V1320.5ZM1180.87 1320.5V1259.88H1182.92V1320.5ZM1181.99 1320.5V1249.77H1184.04V1320.5ZM1183.1 1320.5V1264.93H1185.15V1320.5ZM1184.22 1320.5V1264.93H1186.27V1320.5ZM1185.33 1320.5V1264.93H1187.38V1320.5ZM1186.45 1320.5V1264.93H1188.5V1320.5ZM1187.56 1320.5V1264.93H1189.61V1320.5ZM1188.68 1320.5V1264.93H1190.73V1320.5ZM1189.79 1320.5V1259.88H1191.84V1320.5ZM1190.91 1320.5V1254.82H1192.96V1320.5ZM1192.02 1320.5V1264.93H1194.07V1320.5ZM1193.14 1320.5V1264.93H1195.19V1320.5ZM1194.25 1320.5V1264.93H1196.3V1320.5ZM1195.37 1320.5V1254.82H1197.42V1320.5ZM1196.48 1320.5V1264.93H1198.53V1320.5ZM1197.6 1320.5V1259.88H1199.65V1320.5ZM1198.72 1320.5V1264.93H1200.77V1320.5ZM1199.83 1320.5V1259.88H1201.88V1320.5ZM1200.95 1320.5V1259.88H1203V1320.5ZM1202.06 1320.5V1264.93H1204.11V1320.5ZM1203.18 1320.5V1264.93H1205.23V1320.5ZM1204.29 1320.5V1254.82H1206.34V1320.5ZM1205.41 1320.5V1264.93H1207.46V1320.5ZM1206.52 1320.5V1264.93H1208.57V1320.5ZM1207.64 1320.5V1264.93H1209.69V1320.5ZM1208.75 1320.5V1259.88H1210.8V1320.5ZM1209.87 1320.5V1259.88H1211.92V1320.5ZM1210.98 1320.5V1264.93H1213.03V1320.5ZM1358.19 1320.5V1264.93H1360.24V1320.5ZM1359.3 1320.5V1264.93H1361.35V1320.5ZM1360.42 1320.5V1264.93H1362.47V1320.5ZM1361.53 1320.5V1264.93H1363.58V1320.5ZM1362.65 1320.5V1259.88H1364.7V1320.5ZM1363.76 1320.5V1259.88H1365.81V1320.5ZM1364.88 1320.5V1264.93H1366.93V1320.5ZM1365.99 1320.5V1254.82H1368.04V1320.5ZM1367.11 1320.5V1249.77H1369.16V1320.5ZM1368.22 1320.5V1259.88H1370.27V1320.5ZM1369.34 1320.5V1254.82H1371.39V1320.5ZM1370.45 1320.5V1259.88H1372.5V1320.5ZM1371.57 1320.5V1259.88H1373.62V1320.5ZM1372.68 1320.5V1264.93H1374.73V1320.5ZM1373.8 1320.5V1264.93H1375.85V1320.5ZM1374.91 1320.5V1259.88H1376.96V1320.5ZM1376.03 1320.5V1264.93H1378.08V1320.5ZM1377.14 1320.5V1264.93H1379.19V1320.5ZM1378.26 1320.5V1259.88H1380.31V1320.5ZM1379.37 1320.5V1264.93H1381.42V1320.5ZM1380.49 1320.5V1259.88H1382.54V1320.5ZM1381.6 1320.5V1259.88H1383.65V1320.5ZM1382.72 1320.5V1254.82H1384.77V1320.5ZM1383.83 1320.5V1264.93H1385.88V1320.5ZM1384.95 1320.5V1264.93H1387V1320.5ZM1386.07 1320.5V1264.93H1388.12V1320.5ZM1387.18 1320.5V1264.93H1389.23V1320.5ZM1388.3 1320.5V1259.88H1390.35V1320.5ZM1389.41 1320.5V1249.77H1391.46V1320.5ZM1390.53 1320.5V1264.93H1392.58V1320.5ZM1391.64 1320.5V1264.93H1393.69V1320.5ZM1392.76 1320.5V1259.88H1394.81V1320.5ZM1393.87 1320.5V1264.93H1395.92V1320.5ZM1394.99 1320.5V1264.93H1397.04V1320.5ZM1396.1 1320.5V1264.93H1398.15V1320.5ZM1397.22 1320.5V1264.93H1399.27V1320.5ZM1398.33 1320.5V1259.88H1400.38V1320.5ZM1399.45 1320.5V1264.93H1401.5V1320.5ZM1400.56 1320.5V1254.82H1402.61V1320.5ZM1401.68 1320.5V1264.93H1403.73V1320.5ZM1402.79 1320.5V1264.93H1404.84V1320.5ZM1403.91 1320.5V1259.88H1405.96V1320.5ZM1405.02 1320.5V1254.82H1407.07V1320.5ZM1406.14 1320.5V1264.93H1408.19V1320.5ZM1407.25 1320.5V1254.82H1409.3V1320.5ZM1408.37 1320.5V1264.93H1410.42V1320.5ZM1409.48 1320.5V1264.93H1411.53V1320.5ZM1410.6 1320.5V1259.88H1412.65V1320.5ZM1411.71 1320.5V1259.88H1413.76V1320.5ZM1412.83 1320.5V1264.93H1414.88V1320.5ZM1413.94 1320.5V1264.93H1415.99V1320.5ZM1415.06 1320.5V1264.93H1417.11V1320.5ZM1416.18 1320.5V1264.93H1418.23V1320.5ZM1417.29 1320.5V1259.88H1419.34V1320.5ZM1418.41 1320.5V1259.88H1420.46V1320.5ZM1419.52 1320.5V1259.88H1421.57V1320.5ZM1420.64 1320.5V1254.82H1422.69V1320.5ZM1421.75 1320.5V1264.93H1423.8V1320.5ZM1422.87 1320.5V1264.93H1424.92V1320.5ZM1423.98 1320.5V1264.93H1426.03V1320.5ZM1425.1 1320.5V1249.77H1427.15V1320.5ZM1426.21 1320.5V1264.93H1428.26V1320.5ZM1427.33 1320.5V1264.93H1429.38V1320.5ZM1428.44 1320.5V1264.93H1430.49V1320.5ZM1429.56 1320.5V1264.93H1431.61V1320.5ZM1430.67 1320.5V1264.93H1432.72V1320.5ZM1431.79 1320.5V1259.88H1433.84V1320.5ZM1432.9 1320.5V1254.82H1434.95V1320.5ZM1434.02 1320.5V1259.88H1436.07V1320.5ZM1435.13 1320.5V1254.82H1437.18V1320.5ZM1436.25 1320.5V1259.88H1438.3V1320.5ZM1437.36 1320.5V1264.93H1439.41V1320.5ZM1438.48 1320.5V1264.93H1440.53V1320.5ZM1439.59 1320.5V1264.93H1441.64V1320.5ZM1440.71 1320.5V1264.93H1442.76V1320.5ZM1441.82 1320.5V1259.88H1443.87V1320.5ZM1442.94 1320.5V1264.93H1444.99V1320.5ZM1444.05 1320.5V1264.93H1446.1V1320.5ZM1445.17 1320.5V1264.93H1447.22V1320.5ZM1446.28 1320.5V1264.93H1448.33V1320.5ZM1447.4 1320.5V1259.88H1449.45V1320.5ZM1448.52 1320.5V1264.93H1450.57V1320.5ZM1449.63 1320.5V1264.93H1451.68V1320.5ZM1450.75 1320.5V1259.88H1452.8V1320.5ZM1451.86 1320.5V1264.93H1453.91V1320.5ZM1452.98 1320.5V1254.82H1455.03V1320.5ZM1454.09 1320.5V1259.88H1456.14V1320.5ZM1455.21 1320.5V1259.88H1457.26V1320.5ZM1456.32 1320.5V1264.93H1458.37V1320.5ZM1457.44 1320.5V1264.93H1459.49V1320.5ZM1458.55 1320.5V1264.93H1460.6V1320.5ZM1459.67 1320.5V1259.88H1461.72V1320.5ZM1460.78 1320.5V1264.93H1462.83V1320.5ZM1461.9 1320.5V1259.88H1463.95V1320.5ZM1463.01 1320.5V1259.88H1465.06V1320.5ZM1464.13 1320.5V1264.93H1466.18V1320.5ZM1465.24 1320.5V1264.93H1467.29V1320.5ZM1466.36 1320.5V1264.93H1468.41V1320.5ZM1467.47 1320.5V1264.93H1469.52V1320.5ZM1468.59 1320.5V1264.93H1470.64V1320.5ZM1469.7 1320.5V1264.93H1471.75V1320.5ZM1470.82 1320.5V1264.93H1472.87V1320.5ZM1471.93 1320.5V1264.93H1473.98V1320.5ZM1473.05 1320.5V1264.93H1475.1V1320.5ZM1474.16 1320.5V1264.93H1476.21V1320.5ZM1475.28 1320.5V1264.93H1477.33V1320.5ZM1476.39 1320.5V1264.93H1478.44V1320.5ZM1477.51 1320.5V1259.88H1479.56V1320.5ZM1478.63 1320.5V1259.88H1480.68V1320.5ZM1479.74 1320.5V1264.93H1481.79V1320.5ZM1480.86 1320.5V1254.82H1482.91V1320.5ZM1481.97 1320.5V1264.93H1484.02V1320.5ZM1483.09 1320.5V1259.88H1485.14V1320.5ZM1484.2 1320.5V1254.82H1486.25V1320.5ZM1485.32 1320.5V1254.82H1487.37V1320.5ZM1486.43 1320.5V1264.93H1488.48V1320.5ZM1487.55 1320.5V1259.88H1489.6V1320.5ZM1488.66 1320.5V1259.88H1490.71V1320.5ZM1489.78 1320.5V1254.82H1491.83V1320.5ZM1490.89 1320.5V1254.82H1492.94V1320.5ZM1492.01 1320.5V1264.93H1494.06V1320.5ZM1493.12 1320.5V1264.93H1495.17V1320.5ZM1494.24 1320.5V1264.93H1496.29V1320.5ZM1495.35 1320.5V1264.93H1497.4V1320.5ZM1496.47 1320.5V1254.82H1498.52V1320.5ZM1497.58 1320.5V1264.93H1499.63V1320.5ZM1498.7 1320.5V1259.88H1500.75V1320.5ZM1499.81 1320.5V1264.93H1501.86V1320.5ZM1500.93 1320.5V1264.93H1502.98V1320.5ZM1502.04 1320.5V1264.93H1504.09V1320.5ZM1503.16 1320.5V1254.82H1505.21V1320.5ZM1504.27 1320.5V1264.93H1506.32V1320.5ZM1505.39 1320.5V1264.93H1507.44V1320.5ZM1506.5 1320.5V1264.93H1508.55V1320.5ZM1507.62 1320.5V1254.82H1509.67V1320.5ZM1508.73 1320.5V1259.88H1510.78V1320.5ZM1509.85 1320.5V1259.88H1511.9V1320.5ZM1510.97 1320.5V1254.82H1513.02V1320.5ZM1512.08 1320.5V1264.93H1514.13V1320.5ZM1513.2 1320.5V1264.93H1515.25V1320.5ZM1514.31 1320.5V1264.93H1516.36V1320.5ZM1515.43 1320.5V1264.93H1517.48V1320.5ZM1516.54 1320.5V1264.93H1518.59V1320.5ZM1517.66 1320.5V1259.88H1519.71V1320.5ZM1518.77 1320.5V1254.82H1520.82V1320.5ZM1519.89 1320.5V1254.82H1521.94V1320.5ZM1521 1320.5V1264.93H1523.05V1320.5ZM1522.12 1320.5V1259.88H1524.17V1320.5ZM1523.23 1320.5V1259.88H1525.28V1320.5ZM1524.35 1320.5V1264.93H1526.4V1320.5ZM1525.46 1320.5V1254.82H1527.51V1320.5ZM1526.58 1320.5V1259.88H1528.63V1320.5ZM1527.69 1320.5V1259.88H1529.74V1320.5ZM1528.81 1320.5V1264.93H1530.86V1320.5ZM1529.92 1320.5V1259.88H1531.97V1320.5ZM1531.04 1320.5V1259.88H1533.09V1320.5ZM1532.15 1320.5V1264.93H1534.2V1320.5ZM1679.36 1320.5V1264.93H1681.41V1320.5ZM1680.47 1320.5V1259.88H1682.52V1320.5ZM1681.59 1320.5V1264.93H1683.64V1320.5ZM1682.7 1320.5V1264.93H1684.75V1320.5ZM1683.82 1320.5V1264.93H1685.87V1320.5ZM1684.93 1320.5V1264.93H1686.98V1320.5ZM1686.05 1320.5V1264.93H1688.1V1320.5ZM1687.16 1320.5V1264.93H1689.21V1320.5ZM1688.28 1320.5V1259.88H1690.33V1320.5ZM1689.39 1320.5V1264.93H1691.44V1320.5ZM1690.51 1320.5V1264.93H1692.56V1320.5ZM1691.62 1320.5V1264.93H1693.67V1320.5ZM1692.74 1320.5V1264.93H1694.79V1320.5ZM1693.85 1320.5V1264.93H1695.9V1320.5ZM1694.97 1320.5V1254.82H1697.02V1320.5ZM1696.08 1320.5V1264.93H1698.13V1320.5ZM1697.2 1320.5V1259.88H1699.25V1320.5ZM1698.32 1320.5V1264.93H1700.37V1320.5ZM1699.43 1320.5V1264.93H1701.48V1320.5ZM1700.55 1320.5V1264.93H1702.6V1320.5ZM1701.66 1320.5V1254.82H1703.71V1320.5ZM1702.78 1320.5V1264.93H1704.83V1320.5ZM1703.89 1320.5V1264.93H1705.94V1320.5ZM1705.01 1320.5V1264.93H1707.06V1320.5ZM1706.12 1320.5V1264.93H1708.17V1320.5ZM1707.24 1320.5V1264.93H1709.29V1320.5ZM1708.35 1320.5V1264.93H1710.4V1320.5ZM1709.47 1320.5V1264.93H1711.52V1320.5ZM1710.58 1320.5V1264.93H1712.63V1320.5ZM1711.7 1320.5V1264.93H1713.75V1320.5ZM1712.81 1320.5V1259.88H1714.86V1320.5ZM1713.93 1320.5V1264.93H1715.98V1320.5ZM1715.04 1320.5V1264.93H1717.09V1320.5ZM1716.16 1320.5V1264.93H1718.21V1320.5ZM1717.27 1320.5V1259.88H1719.32V1320.5ZM1718.39 1320.5V1264.93H1720.44V1320.5ZM1719.5 1320.5V1259.88H1721.55V1320.5ZM1720.62 1320.5V1254.82H1722.67V1320.5ZM1721.73 1320.5V1259.88H1723.78V1320.5ZM1722.85 1320.5V1264.93H1724.9V1320.5ZM1723.96 1320.5V1254.82H1726.01V1320.5ZM1725.08 1320.5V1264.93H1727.13V1320.5ZM1726.19 1320.5V1264.93H1728.24V1320.5ZM1727.31 1320.5V1264.93H1729.36V1320.5ZM1728.43 1320.5V1259.88H1730.48V1320.5ZM1729.54 1320.5V1259.88H1731.59V1320.5ZM1730.66 1320.5V1259.88H1732.71V1320.5ZM1731.77 1320.5V1264.93H1733.82V1320.5ZM1732.89 1320.5V1264.93H1734.94V1320.5ZM1734 1320.5V1264.93H1736.05V1320.5ZM1735.12 1320.5V1259.88H1737.17V1320.5ZM1736.23 1320.5V1264.93H1738.28V1320.5ZM1737.35 1320.5V1264.93H1739.4V1320.5ZM1738.46 1320.5V1259.88H1740.51V1320.5ZM1739.58 1320.5V1259.88H1741.63V1320.5ZM1740.69 1320.5V1264.93H1742.74V1320.5ZM1741.81 1320.5V1264.93H1743.86V1320.5ZM1742.92 1320.5V1264.93H1744.97V1320.5ZM1744.04 1320.5V1264.93H1746.09V1320.5ZM1745.15 1320.5V1264.93H1747.2V1320.5ZM1746.27 1320.5V1259.88H1748.32V1320.5ZM1747.38 1320.5V1264.93H1749.43V1320.5ZM1748.5 1320.5V1259.88H1750.55V1320.5ZM1749.61 1320.5V1264.93H1751.66V1320.5ZM1750.73 1320.5V1264.93H1752.78V1320.5ZM1751.84 1320.5V1264.93H1753.89V1320.5ZM1752.96 1320.5V1264.93H1755.01V1320.5ZM1754.07 1320.5V1259.88H1756.12V1320.5ZM1755.19 1320.5V1264.93H1757.24V1320.5ZM1756.3 1320.5V1259.88H1758.35V1320.5ZM1757.42 1320.5V1264.93H1759.47V1320.5ZM1758.53 1320.5V1259.88H1760.58V1320.5ZM1759.65 1320.5V1264.93H1761.7V1320.5ZM1760.77 1320.5V1259.88H1762.82V1320.5ZM1761.88 1320.5V1259.88H1763.93V1320.5ZM1763 1320.5V1259.88H1765.05V1320.5ZM1764.11 1320.5V1264.93H1766.16V1320.5ZM1765.23 1320.5V1259.88H1767.28V1320.5ZM1766.34 1320.5V1249.77H1768.39V1320.5ZM1767.46 1320.5V1264.93H1769.51V1320.5ZM1768.57 1320.5V1259.88H1770.62V1320.5ZM1769.69 1320.5V1259.88H1771.74V1320.5ZM1770.8 1320.5V1259.88H1772.85V1320.5ZM1771.92 1320.5V1264.93H1773.97V1320.5ZM1773.03 1320.5V1264.93H1775.08V1320.5ZM1774.15 1320.5V1264.93H1776.2V1320.5ZM1775.26 1320.5V1264.93H1777.31V1320.5ZM1776.38 1320.5V1259.88H1778.43V1320.5ZM1777.49 1320.5V1264.93H1779.54V1320.5ZM1778.61 1320.5V1264.93H1780.66V1320.5ZM1779.72 1320.5V1254.82H1781.77V1320.5ZM1780.84 1320.5V1264.93H1782.89V1320.5ZM1781.95 1320.5V1264.93H1784V1320.5ZM1783.07 1320.5V1264.93H1785.12V1320.5ZM1784.18 1320.5V1259.88H1786.23V1320.5ZM1785.3 1320.5V1264.93H1787.35V1320.5ZM1786.41 1320.5V1264.93H1788.46V1320.5ZM1787.53 1320.5V1254.82H1789.58V1320.5ZM1788.64 1320.5V1249.77H1790.69V1320.5ZM1789.76 1320.5V1264.93H1791.81V1320.5ZM1790.88 1320.5V1264.93H1792.93V1320.5ZM1791.99 1320.5V1259.88H1794.04V1320.5ZM1793.11 1320.5V1254.82H1795.16V1320.5ZM1794.22 1320.5V1259.88H1796.27V1320.5ZM1795.34 1320.5V1259.88H1797.39V1320.5ZM1796.45 1320.5V1264.93H1798.5V1320.5ZM1797.57 1320.5V1259.88H1799.62V1320.5ZM1798.68 1320.5V1259.88H1800.73V1320.5ZM1799.8 1320.5V1264.93H1801.85V1320.5ZM1800.91 1320.5V1264.93H1802.96V1320.5ZM1802.03 1320.5V1259.88H1804.08V1320.5ZM1803.14 1320.5V1264.93H1805.19V1320.5ZM1804.26 1320.5V1264.93H1806.31V1320.5ZM1805.37 1320.5V1264.93H1807.42V1320.5ZM1806.49 1320.5V1264.93H1808.54V1320.5ZM1807.6 1320.5V1264.93H1809.65V1320.5ZM1808.72 1320.5V1264.93H1810.77V1320.5ZM1809.83 1320.5V1264.93H1811.88V1320.5ZM1810.95 1320.5V1259.88H1813V1320.5ZM1812.06 1320.5V1264.93H1814.11V1320.5ZM1813.18 1320.5V1264.93H1815.23V1320.5ZM1814.29 1320.5V1264.93H1816.34V1320.5ZM1815.41 1320.5V1264.93H1817.46V1320.5ZM1816.52 1320.5V1264.93H1818.57V1320.5ZM1817.64 1320.5V1264.93H1819.69V1320.5ZM1818.75 1320.5V1259.88H1820.8V1320.5ZM1819.87 1320.5V1259.88H1821.92V1320.5ZM1820.98 1320.5V1259.88H1823.03V1320.5ZM1822.1 1320.5V1264.93H1824.15V1320.5ZM1823.22 1320.5V1254.82H1825.27V1320.5ZM1824.33 1320.5V1264.93H1826.38V1320.5ZM1825.45 1320.5V1259.88H1827.5V1320.5ZM1826.56 1320.5V1264.93H1828.61V1320.5ZM1827.68 1320.5V1264.93H1829.73V1320.5ZM1828.79 1320.5V1264.93H1830.84V1320.5ZM1829.91 1320.5V1264.93H1831.96V1320.5ZM1831.02 1320.5V1249.77H1833.07V1320.5ZM1832.14 1320.5V1264.93H1834.19V1320.5ZM1833.25 1320.5V1264.93H1835.3V1320.5ZM1834.37 1320.5V1264.93H1836.42V1320.5ZM1835.48 1320.5V1264.93H1837.53V1320.5ZM1836.6 1320.5V1264.93H1838.65V1320.5ZM1837.71 1320.5V1259.88H1839.76V1320.5ZM1838.83 1320.5V1264.93H1840.88V1320.5ZM1839.94 1320.5V1264.93H1841.99V1320.5ZM1841.06 1320.5V1254.82H1843.11V1320.5ZM1842.17 1320.5V1264.93H1844.22V1320.5ZM1843.29 1320.5V1264.93H1845.34V1320.5ZM1844.4 1320.5V1254.82H1846.45V1320.5ZM1845.52 1320.5V1264.93H1847.57V1320.5ZM1846.63 1320.5V1264.93H1848.68V1320.5ZM1847.75 1320.5V1264.93H1849.8V1320.5ZM1848.86 1320.5V1259.88H1850.91V1320.5ZM1849.98 1320.5V1264.93H1852.03V1320.5ZM1851.09 1320.5V1264.93H1853.14V1320.5ZM1852.21 1320.5V1264.93H1854.26V1320.5ZM1853.33 1320.5V1264.93H1855.38V1320.5ZM2000.53 1320.5V1264.93H2002.58V1320.5ZM2001.64 1320.5V1269.98H2003.69V1320.5ZM2002.76 1320.5V1269.98H2004.81V1320.5ZM2003.87 1320.5V1269.98H2005.92V1320.5ZM2004.99 1320.5V1269.98H2007.04V1320.5ZM2006.1 1320.5V1269.98H2008.15V1320.5ZM2007.22 1320.5V1269.98H2009.27V1320.5ZM2008.33 1320.5V1269.98H2010.38V1320.5ZM2009.45 1320.5V1269.98H2011.5V1320.5ZM2010.57 1320.5V1264.93H2012.62V1320.5ZM2011.68 1320.5V1259.88H2013.73V1320.5ZM2012.8 1320.5V1269.98H2014.85V1320.5ZM2013.91 1320.5V1269.98H2015.96V1320.5ZM2015.03 1320.5V1269.98H2017.08V1320.5ZM2016.14 1320.5V1264.93H2018.19V1320.5ZM2017.26 1320.5V1269.98H2019.31V1320.5ZM2018.37 1320.5V1269.98H2020.42V1320.5ZM2019.49 1320.5V1269.98H2021.54V1320.5ZM2020.6 1320.5V1269.98H2022.65V1320.5ZM2021.72 1320.5V1264.93H2023.77V1320.5ZM2022.83 1320.5V1269.98H2024.88V1320.5ZM2023.95 1320.5V1269.98H2026V1320.5ZM2025.06 1320.5V1264.93H2027.11V1320.5ZM2026.18 1320.5V1269.98H2028.23V1320.5ZM2027.29 1320.5V1269.98H2029.34V1320.5ZM2028.41 1320.5V1269.98H2030.46V1320.5ZM2029.52 1320.5V1269.98H2031.57V1320.5ZM2030.64 1320.5V1264.93H2032.69V1320.5ZM2031.75 1320.5V1254.82H2033.8V1320.5ZM2032.87 1320.5V1264.93H2034.92V1320.5ZM2033.98 1320.5V1269.98H2036.03V1320.5ZM2035.1 1320.5V1269.98H2037.15V1320.5ZM2036.21 1320.5V1269.98H2038.26V1320.5ZM2037.33 1320.5V1269.98H2039.38V1320.5ZM2038.44 1320.5V1259.88H2040.49V1320.5ZM2039.56 1320.5V1269.98H2041.61V1320.5ZM2040.68 1320.5V1269.98H2042.73V1320.5ZM2041.79 1320.5V1269.98H2043.84V1320.5ZM2042.91 1320.5V1269.98H2044.96V1320.5ZM2044.02 1320.5V1264.93H2046.07V1320.5ZM2045.14 1320.5V1269.98H2047.19V1320.5ZM2046.25 1320.5V1269.98H2048.3V1320.5ZM2047.37 1320.5V1269.98H2049.42V1320.5ZM2048.48 1320.5V1269.98H2050.53V1320.5ZM2049.6 1320.5V1264.93H2051.65V1320.5ZM2050.71 1320.5V1259.88H2052.76V1320.5ZM2051.83 1320.5V1269.98H2053.88V1320.5ZM2052.94 1320.5V1269.98H2054.99V1320.5ZM2054.06 1320.5V1264.93H2056.11V1320.5ZM2055.17 1320.5V1269.98H2057.22V1320.5ZM2056.29 1320.5V1269.98H2058.34V1320.5ZM2057.4 1320.5V1264.93H2059.45V1320.5ZM2058.52 1320.5V1269.98H2060.57V1320.5ZM2059.63 1320.5V1269.98H2061.68V1320.5ZM2060.75 1320.5V1269.98H2062.8V1320.5ZM2061.86 1320.5V1264.93H2063.91V1320.5ZM2062.98 1320.5V1264.93H2065.03V1320.5ZM2064.09 1320.5V1269.98H2066.14V1320.5ZM2065.21 1320.5V1269.98H2067.26V1320.5ZM2066.32 1320.5V1269.98H2068.37V1320.5ZM2067.44 1320.5V1259.88H2069.49V1320.5ZM2068.55 1320.5V1269.98H2070.6V1320.5ZM2069.67 1320.5V1269.98H2071.72V1320.5ZM2070.78 1320.5V1264.93H2072.83V1320.5ZM2071.9 1320.5V1269.98H2073.95V1320.5ZM2073.02 1320.5V1269.98H2075.07V1320.5ZM2074.13 1320.5V1269.98H2076.18V1320.5ZM2075.25 1320.5V1269.98H2077.3V1320.5ZM2076.36 1320.5V1269.98H2078.41V1320.5ZM2077.48 1320.5V1269.98H2079.53V1320.5ZM2078.59 1320.5V1264.93H2080.64V1320.5ZM2079.71 1320.5V1264.93H2081.76V1320.5ZM2080.82 1320.5V1264.93H2082.87V1320.5ZM2081.94 1320.5V1269.98H2083.99V1320.5ZM2083.05 1320.5V1264.93H2085.1V1320.5ZM2084.17 1320.5V1269.98H2086.22V1320.5ZM2085.28 1320.5V1269.98H2087.33V1320.5ZM2086.4 1320.5V1269.98H2088.45V1320.5ZM2087.51 1320.5V1264.93H2089.56V1320.5ZM2088.63 1320.5V1259.88H2090.68V1320.5ZM2089.74 1320.5V1269.98H2091.79V1320.5ZM2090.86 1320.5V1264.93H2092.91V1320.5ZM2091.97 1320.5V1264.93H2094.02V1320.5ZM2093.09 1320.5V1269.98H2095.14V1320.5ZM2094.2 1320.5V1269.98H2096.25V1320.5ZM2095.32 1320.5V1269.98H2097.37V1320.5ZM2096.43 1320.5V1259.88H2098.48V1320.5ZM2097.55 1320.5V1269.98H2099.6V1320.5ZM2098.66 1320.5V1269.98H2100.71V1320.5ZM2099.78 1320.5V1269.98H2101.83V1320.5ZM2100.89 1320.5V1275.03H2102.94V1320.5ZM2102.01 1320.5V1269.98H2104.06V1320.5ZM2103.12 1320.5V1269.98H2105.18V1320.5ZM2104.24 1320.5V1269.98H2106.29V1320.5ZM2105.36 1320.5V1269.98H2107.41V1320.5ZM2106.47 1320.5V1269.98H2108.52V1320.5ZM2107.59 1320.5V1275.03H2109.64V1320.5ZM2108.7 1320.5V1269.98H2110.75V1320.5ZM2109.82 1320.5V1269.98H2111.87V1320.5ZM2110.93 1320.5V1269.98H2112.98V1320.5ZM2112.05 1320.5V1259.88H2114.1V1320.5ZM2113.16 1320.5V1269.98H2115.21V1320.5ZM2114.28 1320.5V1269.98H2116.33V1320.5ZM2115.39 1320.5V1264.93H2117.44V1320.5ZM2116.51 1320.5V1275.03H2118.56V1320.5ZM2117.62 1320.5V1269.98H2119.67V1320.5ZM2118.74 1320.5V1259.88H2120.79V1320.5ZM2119.85 1320.5V1269.98H2121.9V1320.5ZM2120.97 1320.5V1269.98H2123.02V1320.5ZM2122.08 1320.5V1269.98H2124.13V1320.5ZM2123.2 1320.5V1275.03H2125.25V1320.5ZM2124.31 1320.5V1269.98H2126.36V1320.5ZM2125.43 1320.5V1269.98H2127.48V1320.5ZM2126.54 1320.5V1269.98H2128.59V1320.5ZM2127.66 1320.5V1269.98H2129.71V1320.5ZM2128.77 1320.5V1269.98H2130.82V1320.5ZM2129.89 1320.5V1269.98H2131.94V1320.5ZM2131 1320.5V1269.98H2133.05V1320.5ZM2132.12 1320.5V1264.93H2134.17V1320.5ZM2133.23 1320.5V1269.98H2135.28V1320.5ZM2134.35 1320.5V1259.88H2136.4V1320.5ZM2135.47 1320.5V1269.98H2137.52V1320.5ZM2136.58 1320.5V1269.98H2138.63V1320.5ZM2137.7 1320.5V1269.98H2139.75V1320.5ZM2138.81 1320.5V1269.98H2140.86V1320.5ZM2139.93 1320.5V1275.03H2141.98V1320.5ZM2141.04 1320.5V1259.88H2143.09V1320.5ZM2142.16 1320.5V1269.98H2144.21V1320.5ZM2143.27 1320.5V1269.98H2145.32V1320.5ZM2144.39 1320.5V1269.98H2146.44V1320.5ZM2145.5 1320.5V1269.98H2147.55V1320.5ZM2146.62 1320.5V1269.98H2148.67V1320.5ZM2147.73 1320.5V1269.98H2149.78V1320.5ZM2148.85 1320.5V1269.98H2150.9V1320.5ZM2149.96 1320.5V1269.98H2152.01V1320.5ZM2151.08 1320.5V1269.98H2153.13V1320.5ZM2152.19 1320.5V1269.98H2154.24V1320.5ZM2153.31 1320.5V1269.98H2155.36V1320.5ZM2154.42 1320.5V1269.98H2156.47V1320.5ZM2155.54 1320.5V1259.88H2157.59V1320.5ZM2156.65 1320.5V1269.98H2158.7V1320.5ZM2157.77 1320.5V1269.98H2159.82V1320.5ZM2158.88 1320.5V1269.98H2160.93V1320.5ZM2160 1320.5V1269.98H2162.05V1320.5ZM2161.11 1320.5V1269.98H2163.16V1320.5ZM2162.23 1320.5V1269.98H2164.28V1320.5ZM2163.34 1320.5V1259.88H2165.39V1320.5ZM2164.46 1320.5V1269.98H2166.51V1320.5ZM2165.58 1320.5V1269.98H2167.63V1320.5ZM2166.69 1320.5V1269.98H2168.74V1320.5ZM2167.81 1320.5V1264.93H2169.86V1320.5ZM2168.92 1320.5V1264.93H2170.97V1320.5ZM2170.04 1320.5V1264.93H2172.09V1320.5ZM2171.15 1320.5V1264.93H2173.2V1320.5ZM2172.27 1320.5V1269.98H2174.32V1320.5ZM2173.38 1320.5V1269.98H2175.43V1320.5ZM2174.5 1320.5V1269.98H2176.55V1320.5ZM2175.61 1320.5V1264.93H2177.66V1320.5ZM2176.73 1320.5V1259.88H2178.78V1320.5ZM2177.84 1320.5V1269.98H2179.89V1320.5ZM2178.96 1320.5V1269.98H2181.01V1320.5ZM2180.07 1320.5V1264.93H2182.12V1320.5ZM2181.19 1320.5V1269.98H2183.24V1320.5ZM2182.3 1320.5V1264.93H2184.35V1320.5ZM2183.42 1320.5V1259.88H2185.47V1320.5ZM2184.53 1320.5V1269.98H2186.58V1320.5ZM2185.65 1320.5V1269.98H2187.7V1320.5ZM2186.76 1320.5V1259.88H2188.81V1320.5ZM2187.88 1320.5V1259.88H2189.93V1320.5ZM2188.99 1320.5V1254.82H2191.04V1320.5ZM2190.11 1320.5V1259.88H2192.16V1320.5ZM2191.22 1320.5V1264.93H2193.27V1320.5ZM2192.34 1320.5V1269.98H2194.39V1320.5ZM2193.45 1320.5V1269.98H2195.5V1320.5ZM2194.57 1320.5V1264.93H2196.62V1320.5ZM2195.68 1320.5V1259.88H2197.73V1320.5ZM2196.8 1320.5V1264.93H2198.85V1320.5ZM2197.92 1320.5V1269.98H2199.97V1320.5ZM2199.03 1320.5V1269.98H2201.08V1320.5ZM2200.15 1320.5V1264.93H2202.2V1320.5ZM2201.26 1320.5V1264.93H2203.31V1320.5ZM2202.38 1320.5V1259.88H2204.43V1320.5ZM2203.49 1320.5V1269.98H2205.54V1320.5ZM2204.61 1320.5V1264.93H2206.66V1320.5ZM2205.72 1320.5V1269.98H2207.77V1320.5ZM2206.84 1320.5V1269.98H2208.89V1320.5ZM2207.95 1320.5V1259.88H2210V1320.5ZM2209.07 1320.5V1264.93H2211.12V1320.5ZM2210.18 1320.5V1264.93H2212.23V1320.5ZM2211.3 1320.5V1264.93H2213.35V1320.5ZM2212.41 1320.5V1269.98H2214.46V1320.5ZM2213.53 1320.5V1264.93H2215.58V1320.5ZM2214.64 1320.5V1259.88H2216.69V1320.5ZM2215.76 1320.5V1264.93H2217.81V1320.5ZM2216.87 1320.5V1264.93H2218.92V1320.5ZM2217.99 1320.5V1269.98H2220.04V1320.5ZM2219.1 1320.5V1264.93H2221.15V1320.5ZM2220.22 1320.5V1269.98H2222.27V1320.5ZM2221.33 1320.5V1254.82H2223.38V1320.5ZM2222.45 1320.5V1264.93H2224.5V1320.5ZM2223.56 1320.5V1264.93H2225.61V1320.5ZM2224.68 1320.5V1264.93H2226.73V1320.5ZM2225.79 1320.5V1269.98H2227.84V1320.5ZM2226.91 1320.5V1264.93H2228.96V1320.5ZM2228.03 1320.5V1259.88H2230.08V1320.5ZM2229.14 1320.5V1259.88H2231.19V1320.5ZM2230.26 1320.5V1269.98H2232.31V1320.5ZM2231.37 1320.5V1264.93H2233.42V1320.5ZM2232.49 1320.5V1264.93H2234.54V1320.5ZM2233.6 1320.5V1269.98H2235.65V1320.5ZM2234.72 1320.5V1269.98H2236.77V1320.5ZM2235.83 1320.5V1264.93H2237.88V1320.5ZM2236.95 1320.5V1259.88H2239V1320.5ZM2238.06 1320.5V1264.93H2240.11V1320.5ZM2239.18 1320.5V1269.98H2241.23V1320.5ZM2240.29 1320.5V1269.98H2242.34V1320.5ZM2241.41 1320.5V1264.93H2243.46V1320.5ZM2242.52 1320.5V1269.98H2244.57V1320.5ZM2243.64 1320.5V1269.98H2245.69V1320.5ZM2244.75 1320.5V1264.93H2246.8V1320.5ZM2245.87 1320.5V1269.98H2247.92V1320.5ZM2246.98 1320.5V1264.93H2249.03V1320.5ZM2248.1 1320.5V1264.93H2250.15V1320.5ZM2249.21 1320.5V1264.93H2251.26V1320.5ZM2250.33 1320.5V1269.98H2252.38V1320.5ZM2251.44 1320.5V1269.98H2253.49V1320.5ZM2252.56 1320.5V1264.93H2254.61V1320.5ZM2253.67 1320.5V1269.98H2255.72V1320.5ZM2254.79 1320.5V1269.98H2256.84V1320.5ZM2255.9 1320.5V1264.93H2257.95V1320.5ZM2257.02 1320.5V1269.98H2259.07V1320.5ZM2258.13 1320.5V1269.98H2260.18V1320.5ZM2259.25 1320.5V1259.88H2261.3V1320.5ZM2260.37 1320.5V1259.88H2262.42V1320.5ZM2261.48 1320.5V1269.98H2263.53V1320.5ZM2262.6 1320.5V1264.93H2264.65V1320.5ZM2263.71 1320.5V1264.93H2265.76V1320.5ZM2264.83 1320.5V1269.98H2266.88V1320.5ZM2265.94 1320.5V1264.93H2267.99V1320.5ZM2267.06 1320.5V1269.98H2269.11V1320.5ZM2268.17 1320.5V1269.98H2270.22V1320.5ZM2269.29 1320.5V1264.93H2271.34V1320.5ZM2270.4 1320.5V1264.93H2272.45V1320.5ZM2271.52 1320.5V1269.98H2273.57V1320.5ZM2272.63 1320.5V1269.98H2274.68V1320.5ZM2273.75 1320.5V1264.93H2275.8V1320.5ZM2274.86 1320.5V1264.93H2276.91V1320.5ZM2275.98 1320.5V1269.98H2278.03V1320.5ZM2277.09 1320.5V1264.93H2279.14V1320.5ZM2278.21 1320.5V1269.98H2280.26V1320.5ZM2279.32 1320.5V1269.98H2281.37V1320.5ZM2280.44 1320.5V1264.93H2282.49V1320.5ZM2281.55 1320.5V1264.93H2283.6V1320.5ZM2282.67 1320.5V1269.98H2284.72V1320.5ZM2283.78 1320.5V1264.93H2285.83V1320.5ZM2284.9 1320.5V1269.98H2286.95V1320.5ZM2286.01 1320.5V1269.98H2288.06V1320.5ZM2287.13 1320.5V1264.93H2289.18V1320.5ZM2288.24 1320.5V1264.93H2290.29V1320.5ZM2289.36 1320.5V1269.98H2291.41V1320.5ZM2290.47 1320.5V1269.98H2292.53V1320.5ZM2291.59 1320.5V1264.93H2293.64V1320.5ZM2292.71 1320.5V1269.98H2294.76V1320.5ZM2293.82 1320.5V1264.93H2295.87V1320.5ZM2294.94 1320.5V1264.93H2296.99V1320.5ZM2296.05 1320.5V1269.98H2298.1V1320.5ZM2297.17 1320.5V1269.98H2299.22V1320.5ZM2298.28 1320.5V1259.88H2300.33V1320.5ZM2299.4 1320.5V1259.88H2301.45V1320.5ZM2300.51 1320.5V1269.98H2302.56V1320.5ZM2301.63 1320.5V1269.98H2303.68V1320.5ZM2302.74 1320.5V1264.93H2304.79V1320.5ZM2303.86 1320.5V1269.98H2305.91V1320.5ZM2304.97 1320.5V1275.03H2307.02V1320.5ZM2306.09 1320.5V1264.93H2308.14V1320.5ZM2307.2 1320.5V1269.98H2309.25V1320.5ZM2308.32 1320.5V1269.98H2310.37V1320.5ZM2309.43 1320.5V1264.93H2311.48V1320.5ZM2310.55 1320.5V1269.98H2312.6V1320.5ZM2311.66 1320.5V1264.93H2313.71V1320.5ZM2312.78 1320.5V1264.93H2314.83V1320.5ZM2313.89 1320.5V1264.93H2315.94V1320.5ZM2315.01 1320.5V1269.98H2317.06V1320.5ZM2316.12 1320.5V1269.98H2318.17V1320.5ZM2317.24 1320.5V1264.93H2319.29V1320.5ZM2318.35 1320.5V1269.98H2320.4V1320.5ZM2319.47 1320.5V1269.98H2321.52V1320.5ZM2320.58 1320.5V1264.93H2322.63V1320.5ZM2321.7 1320.5V1269.98H2323.75V1320.5ZM2322.82 1320.5V1269.98H2324.87V1320.5ZM2323.93 1320.5V1259.88H2325.98V1320.5ZM2325.05 1320.5V1264.93H2327.1V1320.5ZM2326.16 1320.5V1269.98H2328.21V1320.5ZM2327.28 1320.5V1269.98H2329.33V1320.5ZM2328.39 1320.5V1264.93H2330.44V1320.5ZM2329.51 1320.5V1269.98H2331.56V1320.5ZM2330.62 1320.5V1269.98H2332.67V1320.5ZM2331.74 1320.5V1264.93H2333.79V1320.5ZM2332.85 1320.5V1269.98H2334.9V1320.5ZM2333.97 1320.5V1264.93H2336.02V1320.5ZM2335.08 1320.5V1259.88H2337.13V1320.5ZM2336.2 1320.5V1269.98H2338.25V1320.5ZM2337.31 1320.5V1269.98H2339.36V1320.5ZM2338.43 1320.5V1264.93H2340.48V1320.5ZM2339.54 1320.5V1269.98H2341.59V1320.5ZM2340.66 1320.5V1269.98H2342.71V1320.5ZM2341.77 1320.5V1269.98H2343.82V1320.5ZM2342.89 1320.5V1264.93H2344.94V1320.5ZM2344 1320.5V1259.88H2346.05V1320.5ZM2345.12 1320.5V1269.98H2347.17V1320.5ZM2346.23 1320.5V1259.88H2348.28V1320.5ZM2347.35 1320.5V1259.88H2349.4V1320.5ZM2348.46 1320.5V1264.93H2350.51V1320.5ZM2349.58 1320.5V1259.88H2351.63V1320.5ZM2350.69 1320.5V1264.93H2352.74V1320.5ZM2351.81 1320.5V1269.98H2353.86V1320.5ZM2352.93 1320.5V1264.93H2354.98V1320.5ZM2354.04 1320.5V1264.93H2356.09V1320.5ZM2355.16 1320.5V1264.93H2357.21V1320.5ZM2356.27 1320.5V1275.03H2358.32V1320.5ZM2357.39 1320.5V1264.93H2359.44V1320.5ZM2358.5 1320.5V1264.93H2360.55V1320.5ZM2359.62 1320.5V1269.98H2361.67V1320.5ZM2360.73 1320.5V1269.98H2362.78V1320.5ZM2361.85 1320.5V1259.88H2363.9V1320.5ZM2362.96 1320.5V1264.93H2365.01V1320.5ZM2364.08 1320.5V1269.98H2366.13V1320.5ZM2365.19 1320.5V1269.98H2367.24V1320.5ZM2366.31 1320.5V1264.93H2368.36V1320.5ZM2367.42 1320.5V1269.98H2369.47V1320.5ZM2368.54 1320.5V1269.98H2370.59V1320.5ZM2369.65 1320.5V1259.88H2371.7V1320.5ZM2370.77 1320.5V1264.93H2372.82V1320.5ZM2371.88 1320.5V1269.98H2373.93V1320.5ZM2373 1320.5V1269.98H2375.05V1320.5ZM2374.11 1320.5V1264.93H2376.16V1320.5ZM2375.23 1320.5V1269.98H2377.28V1320.5ZM2376.34 1320.5V1269.98H2378.39V1320.5ZM2377.46 1320.5V1259.88H2379.51V1320.5ZM2378.57 1320.5V1264.93H2380.62V1320.5ZM2379.69 1320.5V1269.98H2381.74V1320.5ZM2380.8 1320.5V1269.98H2382.85V1320.5ZM2381.92 1320.5V1264.93H2383.97V1320.5ZM2383.03 1320.5V1269.98H2385.08V1320.5ZM2384.15 1320.5V1269.98H2386.2V1320.5ZM2385.27 1320.5V1264.93H2387.32V1320.5ZM2386.38 1320.5V1259.88H2388.43V1320.5ZM2387.5 1320.5V1269.98H2389.55V1320.5ZM2388.61 1320.5V1264.93H2390.66V1320.5ZM2389.73 1320.5V1264.93H2391.78V1320.5ZM2390.84 1320.5V1275.03H2392.89V1320.5ZM2391.96 1320.5V1269.98H2394.01V1320.5ZM2393.07 1320.5V1264.93H2395.12V1320.5ZM2394.19 1320.5V1259.88H2396.24V1320.5ZM2395.3 1320.5V1264.93H2397.35V1320.5ZM2396.42 1320.5V1269.98H2398.47V1320.5ZM2397.53 1320.5V1264.93H2399.58V1320.5ZM2398.65 1320.5V1269.98H2400.7V1320.5ZM2399.76 1320.5V1269.98H2401.81V1320.5ZM2400.88 1320.5V1269.98H2402.93V1320.5ZM2401.99 1320.5V1259.88H2404.04V1320.5ZM2403.11 1320.5V1264.93H2405.16V1320.5ZM2404.22 1320.5V1269.98H2406.27V1320.5ZM2405.34 1320.5V1264.93H2407.39V1320.5ZM2406.45 1320.5V1269.98H2408.5V1320.5ZM2407.57 1320.5V1269.98H2409.62V1320.5ZM2408.68 1320.5V1264.93H2410.73V1320.5ZM2409.8 1320.5V1264.93H2411.85V1320.5ZM2410.91 1320.5V1259.88H2412.96V1320.5ZM2412.03 1320.5V1269.98H2414.08V1320.5ZM2413.14 1320.5V1269.98H2415.19V1320.5ZM2414.26 1320.5V1269.98H2416.31V1320.5Z" fill="#a1edc5"/>
<path d="M569.75 1320.5V1264.93H571.8V1320.5ZM570.87 1320.5V1259.88H572.92V1320.5ZM571.98 1320.5V1259.88H574.03V1320.5ZM573.1 1320.5V1259.88H575.15V1320.5ZM574.22 1320.5V1259.88H576.27V1320.5ZM575.33 1320.5V1259.88H577.38V1320.5ZM576.45 1320.5V1259.88H578.5V1320.5ZM577.56 1320.5V1264.93H579.61V1320.5ZM578.68 1320.5V1264.93H580.73V1320.5ZM579.79 1320.5V1259.88H581.84V1320.5ZM580.91 1320.5V1199.25H582.96V1320.5ZM582.02 1320.5V1194.2H584.07V1320.5ZM583.14 1320.5V1189.15H585.19V1320.5ZM584.25 1320.5V1143.68H586.3V1320.5ZM585.37 1320.5V1128.52H587.42V1320.5ZM586.48 1320.5V1093.16H588.53V1320.5ZM587.6 1320.5V941.6H589.65V1320.5ZM588.71 1320.5V976.96H590.76V1320.5ZM589.83 1320.5V1108.32H591.88V1320.5ZM590.94 1320.5V1108.32H592.99V1320.5ZM592.06 1320.5V1163.89H594.11V1320.5ZM593.17 1320.5V1179.04H595.22V1320.5ZM594.29 1320.5V1153.78H596.34V1320.5ZM595.4 1320.5V971.91H597.45V1320.5ZM596.52 1320.5V951.7H598.57V1320.5ZM597.63 1320.5V1062.85H599.68V1320.5ZM598.75 1320.5V1062.85H600.8V1320.5ZM599.86 1320.5V936.55H601.91V1320.5ZM600.98 1320.5V1017.38H603.03V1320.5ZM602.09 1320.5V1133.58H604.14V1320.5ZM603.21 1320.5V1184.1H605.26V1320.5ZM604.33 1320.5V1179.04H606.38V1320.5ZM605.44 1320.5V1173.99H607.49V1320.5ZM606.56 1320.5V1173.99H608.61V1320.5ZM607.67 1320.5V1204.3H609.72V1320.5ZM608.79 1320.5V1189.15H610.84V1320.5ZM609.9 1320.5V1184.1H611.95V1320.5ZM611.02 1320.5V1088.11H613.07V1320.5ZM612.13 1320.5V1108.32H614.18V1320.5ZM613.25 1320.5V1128.52H615.3V1320.5ZM614.36 1320.5V1083.06H616.41V1320.5ZM615.48 1320.5V1083.06H617.53V1320.5ZM616.59 1320.5V911.29H618.64V1320.5ZM617.71 1320.5V1002.22H619.76V1320.5ZM618.82 1320.5V1062.85H620.87V1320.5ZM619.94 1320.5V1062.85H621.99V1320.5ZM621.05 1320.5V845.61H623.1V1320.5ZM622.17 1320.5V1113.37H624.22V1320.5ZM623.28 1320.5V1158.84H625.33V1320.5ZM624.4 1320.5V1158.84H626.45V1320.5ZM625.51 1320.5V1017.38H627.56V1320.5ZM626.63 1320.5V1017.38H628.68V1320.5ZM627.74 1320.5V951.7H629.79V1320.5ZM628.86 1320.5V1027.48H630.91V1320.5ZM629.97 1320.5V1123.47H632.02V1320.5ZM631.09 1320.5V1123.47H633.14V1320.5ZM632.2 1320.5V1012.33H634.25V1320.5ZM633.32 1320.5V1153.78H635.37V1320.5ZM634.43 1320.5V1163.89H636.48V1320.5ZM635.55 1320.5V1168.94H637.6V1320.5ZM636.67 1320.5V1163.89H638.72V1320.5ZM637.78 1320.5V1108.32H639.83V1320.5ZM638.9 1320.5V1158.84H640.95V1320.5ZM640.01 1320.5V1173.99H642.06V1320.5ZM641.13 1320.5V1163.89H643.18V1320.5ZM642.24 1320.5V1007.28H644.29V1320.5ZM643.36 1320.5V946.65H645.41V1320.5ZM644.47 1320.5V1022.43H646.52V1320.5ZM645.59 1320.5V1098.21H647.64V1320.5ZM646.7 1320.5V1148.73H648.75V1320.5ZM647.82 1320.5V1148.73H649.87V1320.5ZM648.93 1320.5V1138.63H650.98V1320.5ZM650.05 1320.5V1123.47H652.1V1320.5ZM651.16 1320.5V1118.42H653.21V1320.5ZM652.28 1320.5V1113.37H654.33V1320.5ZM653.39 1320.5V1133.58H655.44V1320.5ZM654.51 1320.5V1168.94H656.56V1320.5ZM655.62 1320.5V1168.94H657.67V1320.5ZM656.74 1320.5V1168.94H658.79V1320.5ZM657.85 1320.5V1163.89H659.9V1320.5ZM658.97 1320.5V1158.84H661.02V1320.5ZM660.08 1320.5V1158.84H662.13V1320.5ZM661.2 1320.5V1007.28H663.25V1320.5ZM662.31 1320.5V961.81H664.36V1320.5ZM663.43 1320.5V931.5H665.48V1320.5ZM664.54 1320.5V951.7H666.59V1320.5ZM665.66 1320.5V1022.43H667.71V1320.5ZM666.78 1320.5V1022.43H668.83V1320.5ZM667.89 1320.5V1042.64H669.94V1320.5ZM669.01 1320.5V1037.59H671.06V1320.5ZM670.12 1320.5V1037.59H672.17V1320.5ZM671.24 1320.5V966.86H673.29V1320.5ZM672.35 1320.5V1027.48H674.4V1320.5ZM673.47 1320.5V1093.16H675.52V1320.5ZM674.58 1320.5V1098.21H676.63V1320.5ZM675.7 1320.5V1103.26H677.75V1320.5ZM676.81 1320.5V1108.32H678.86V1320.5ZM677.93 1320.5V1138.63H679.98V1320.5ZM679.04 1320.5V1158.84H681.09V1320.5ZM680.16 1320.5V1103.26H682.21V1320.5ZM681.27 1320.5V1103.26H683.32V1320.5ZM682.39 1320.5V1138.63H684.44V1320.5ZM683.5 1320.5V1138.63H685.55V1320.5ZM684.62 1320.5V1062.85H686.67V1320.5ZM685.73 1320.5V1138.63H687.78V1320.5ZM686.85 1320.5V1128.52H688.9V1320.5ZM687.96 1320.5V1123.47H690.01V1320.5ZM689.08 1320.5V1118.42H691.13V1320.5ZM690.19 1320.5V1123.47H692.24V1320.5ZM691.31 1320.5V1158.84H693.36V1320.5ZM692.42 1320.5V1138.63H694.47V1320.5ZM693.54 1320.5V1123.47H695.59V1320.5ZM694.65 1320.5V1108.32H696.7V1320.5ZM695.77 1320.5V1153.78H697.82V1320.5ZM696.88 1320.5V1168.94H698.93V1320.5ZM698 1320.5V1168.94H700.05V1320.5ZM699.12 1320.5V1173.99H701.17V1320.5ZM700.23 1320.5V1184.1H702.28V1320.5ZM701.35 1320.5V1194.2H703.4V1320.5ZM702.46 1320.5V1194.2H704.51V1320.5ZM703.58 1320.5V1214.41H705.63V1320.5ZM704.69 1320.5V1224.51H706.74V1320.5ZM705.81 1320.5V1244.72H707.86V1320.5ZM706.92 1320.5V1259.88H708.97V1320.5ZM708.04 1320.5V1259.88H710.09V1320.5ZM709.15 1320.5V1264.93H711.2V1320.5ZM710.27 1320.5V1259.88H712.32V1320.5ZM711.38 1320.5V1259.88H713.43V1320.5ZM712.5 1320.5V1259.88H714.55V1320.5ZM713.61 1320.5V1259.88H715.66V1320.5ZM714.73 1320.5V1259.88H716.78V1320.5ZM890.93 1320.5V1259.88H892.98V1320.5ZM892.04 1320.5V1259.88H894.09V1320.5ZM893.16 1320.5V1259.88H895.21V1320.5ZM894.27 1320.5V1264.93H896.32V1320.5ZM895.39 1320.5V1259.88H897.44V1320.5ZM896.5 1320.5V1264.93H898.55V1320.5ZM897.62 1320.5V1259.88H899.67V1320.5ZM898.73 1320.5V1259.88H900.78V1320.5ZM899.85 1320.5V1264.93H901.9V1320.5ZM900.96 1320.5V1259.88H903.01V1320.5ZM902.08 1320.5V1264.93H904.13V1320.5ZM903.19 1320.5V1264.93H905.24V1320.5ZM904.31 1320.5V1219.46H906.36V1320.5ZM905.42 1320.5V1184.1H907.47V1320.5ZM906.54 1320.5V1179.04H908.59V1320.5ZM907.65 1320.5V1194.2H909.7V1320.5ZM908.77 1320.5V1184.1H910.82V1320.5ZM909.88 1320.5V1179.04H911.93V1320.5ZM911 1320.5V1179.04H913.05V1320.5ZM912.11 1320.5V1189.15H914.16V1320.5ZM913.23 1320.5V1168.94H915.28V1320.5ZM914.34 1320.5V1168.94H916.39V1320.5ZM915.46 1320.5V1168.94H917.51V1320.5ZM916.58 1320.5V1173.99H918.63V1320.5ZM917.69 1320.5V1194.2H919.74V1320.5ZM918.81 1320.5V1189.15H920.86V1320.5ZM919.92 1320.5V1194.2H921.97V1320.5ZM921.04 1320.5V1179.04H923.09V1320.5ZM922.15 1320.5V1179.04H924.2V1320.5ZM923.27 1320.5V1189.15H925.32V1320.5ZM924.38 1320.5V1168.94H926.43V1320.5ZM925.5 1320.5V1173.99H927.55V1320.5ZM926.61 1320.5V1173.99H928.66V1320.5ZM927.73 1320.5V1179.04H929.78V1320.5ZM928.84 1320.5V1062.85H930.89V1320.5ZM929.96 1320.5V1103.26H932.01V1320.5ZM931.07 1320.5V1098.21H933.12V1320.5ZM932.19 1320.5V1098.21H934.24V1320.5ZM933.3 1320.5V1179.04H935.35V1320.5ZM934.42 1320.5V1194.2H936.47V1320.5ZM935.53 1320.5V1189.15H937.58V1320.5ZM936.65 1320.5V1143.68H938.7V1320.5ZM937.76 1320.5V1123.47H939.81V1320.5ZM938.88 1320.5V1113.37H940.93V1320.5ZM939.99 1320.5V1103.26H942.04V1320.5ZM941.11 1320.5V1163.89H943.16V1320.5ZM942.22 1320.5V1173.99H944.27V1320.5ZM943.34 1320.5V1184.1H945.39V1320.5ZM944.45 1320.5V1199.25H946.5V1320.5ZM945.57 1320.5V1022.43H947.62V1320.5ZM946.68 1320.5V1062.85H948.73V1320.5ZM947.8 1320.5V1179.04H949.85V1320.5ZM948.92 1320.5V1189.15H950.97V1320.5ZM950.03 1320.5V1168.94H952.08V1320.5ZM951.15 1320.5V1158.84H953.2V1320.5ZM952.26 1320.5V1148.73H954.31V1320.5ZM953.38 1320.5V1163.89H955.43V1320.5ZM954.49 1320.5V1163.89H956.54V1320.5ZM955.61 1320.5V1083.06H957.66V1320.5ZM956.72 1320.5V1138.63H958.77V1320.5ZM957.84 1320.5V1123.47H959.89V1320.5ZM958.95 1320.5V1118.42H961V1320.5ZM960.07 1320.5V1118.42H962.12V1320.5ZM961.18 1320.5V1093.16H963.23V1320.5ZM962.3 1320.5V1108.32H964.35V1320.5ZM963.41 1320.5V1158.84H965.46V1320.5ZM964.53 1320.5V1168.94H966.58V1320.5ZM965.64 1320.5V1168.94H967.69V1320.5ZM966.76 1320.5V1179.04H968.81V1320.5ZM967.87 1320.5V1189.15H969.92V1320.5ZM968.99 1320.5V1199.25H971.04V1320.5ZM970.1 1320.5V1199.25H972.15V1320.5ZM971.22 1320.5V1194.2H973.27V1320.5ZM972.33 1320.5V1199.25H974.38V1320.5ZM973.45 1320.5V1189.15H975.5V1320.5ZM974.56 1320.5V1189.15H976.61V1320.5ZM975.68 1320.5V1184.1H977.73V1320.5ZM976.79 1320.5V1204.3H978.84V1320.5ZM977.91 1320.5V1194.2H979.96V1320.5ZM979.03 1320.5V1199.25H981.08V1320.5ZM980.14 1320.5V1194.2H982.19V1320.5ZM981.26 1320.5V1194.2H983.31V1320.5ZM982.37 1320.5V1189.15H984.42V1320.5ZM983.49 1320.5V1194.2H985.54V1320.5ZM984.6 1320.5V1194.2H986.65V1320.5ZM985.72 1320.5V1194.2H987.77V1320.5ZM986.83 1320.5V1189.15H988.88V1320.5ZM987.95 1320.5V1184.1H990V1320.5ZM989.06 1320.5V1184.1H991.11V1320.5ZM990.18 1320.5V1179.04H992.23V1320.5ZM991.29 1320.5V1189.15H993.34V1320.5ZM992.41 1320.5V1138.63H994.46V1320.5ZM993.52 1320.5V1138.63H995.57V1320.5ZM994.64 1320.5V1012.33H996.69V1320.5ZM995.75 1320.5V1067.9H997.8V1320.5ZM996.87 1320.5V1158.84H998.92V1320.5ZM997.98 1320.5V1184.1H1000.03V1320.5ZM999.1 1320.5V1173.99H1001.15V1320.5ZM1000.21 1320.5V1163.89H1002.26V1320.5ZM1001.33 1320.5V1179.04H1003.38V1320.5ZM1002.44 1320.5V1194.2H1004.49V1320.5ZM1003.56 1320.5V1199.25H1005.61V1320.5ZM1004.67 1320.5V1194.2H1006.72V1320.5ZM1005.79 1320.5V1189.15H1007.84V1320.5ZM1006.9 1320.5V1189.15H1008.95V1320.5ZM1008.02 1320.5V1189.15H1010.07V1320.5ZM1009.13 1320.5V1199.25H1011.18V1320.5ZM1010.25 1320.5V1199.25H1012.3V1320.5ZM1011.37 1320.5V1194.2H1013.42V1320.5ZM1012.48 1320.5V1194.2H1014.53V1320.5ZM1013.6 1320.5V1189.15H1015.65V1320.5ZM1014.71 1320.5V1168.94H1016.76V1320.5ZM1015.83 1320.5V1128.52H1017.88V1320.5ZM1016.94 1320.5V1123.47H1018.99V1320.5ZM1018.06 1320.5V1123.47H1020.11V1320.5ZM1019.17 1320.5V1118.42H1021.22V1320.5ZM1020.29 1320.5V1184.1H1022.34V1320.5ZM1021.4 1320.5V1189.15H1023.45V1320.5ZM1022.52 1320.5V1199.25H1024.57V1320.5ZM1023.63 1320.5V1194.2H1025.68V1320.5ZM1024.75 1320.5V1138.63H1026.8V1320.5ZM1025.86 1320.5V1168.94H1027.91V1320.5ZM1026.98 1320.5V1153.78H1029.03V1320.5ZM1028.09 1320.5V1184.1H1030.14V1320.5ZM1029.21 1320.5V1239.67H1031.26V1320.5ZM1030.32 1320.5V1259.88H1032.37V1320.5ZM1031.44 1320.5V1259.88H1033.49V1320.5ZM1032.55 1320.5V1264.93H1034.6V1320.5ZM1033.67 1320.5V1259.88H1035.72V1320.5ZM1034.78 1320.5V1259.88H1036.83V1320.5ZM1035.9 1320.5V1259.88H1037.95V1320.5ZM1212.1 1320.5V1259.88H1214.15V1320.5ZM1213.21 1320.5V1259.88H1215.26V1320.5ZM1214.33 1320.5V1259.88H1216.38V1320.5ZM1215.44 1320.5V1259.88H1217.49V1320.5ZM1216.56 1320.5V1259.88H1218.61V1320.5ZM1217.67 1320.5V1259.88H1219.72V1320.5ZM1218.79 1320.5V1264.93H1220.84V1320.5ZM1219.9 1320.5V1264.93H1221.95V1320.5ZM1221.02 1320.5V1264.93H1223.07V1320.5ZM1222.13 1320.5V1259.88H1224.18V1320.5ZM1223.25 1320.5V1264.93H1225.3V1320.5ZM1224.36 1320.5V1219.46H1226.41V1320.5ZM1225.48 1320.5V1133.58H1227.53V1320.5ZM1226.59 1320.5V1138.63H1228.64V1320.5ZM1227.71 1320.5V1012.33H1229.76V1320.5ZM1228.83 1320.5V1027.48H1230.88V1320.5ZM1229.94 1320.5V1128.52H1231.99V1320.5ZM1231.06 1320.5V1143.68H1233.11V1320.5ZM1232.17 1320.5V1148.73H1234.22V1320.5ZM1233.29 1320.5V1158.84H1235.34V1320.5ZM1234.4 1320.5V1153.78H1236.45V1320.5ZM1235.52 1320.5V1148.73H1237.57V1320.5ZM1236.63 1320.5V1083.06H1238.68V1320.5ZM1237.75 1320.5V1143.68H1239.8V1320.5ZM1238.86 1320.5V1143.68H1240.91V1320.5ZM1239.98 1320.5V1158.84H1242.03V1320.5ZM1241.09 1320.5V1138.63H1243.14V1320.5ZM1242.21 1320.5V1143.68H1244.26V1320.5ZM1243.32 1320.5V1093.16H1245.37V1320.5ZM1244.44 1320.5V1118.42H1246.49V1320.5ZM1245.55 1320.5V1158.84H1247.6V1320.5ZM1246.67 1320.5V1158.84H1248.72V1320.5ZM1247.78 1320.5V1173.99H1249.83V1320.5ZM1248.9 1320.5V1158.84H1250.95V1320.5ZM1250.01 1320.5V1158.84H1252.06V1320.5ZM1251.13 1320.5V1163.89H1253.18V1320.5ZM1252.24 1320.5V1168.94H1254.29V1320.5ZM1253.36 1320.5V1163.89H1255.41V1320.5ZM1254.47 1320.5V1163.89H1256.52V1320.5ZM1255.59 1320.5V1173.99H1257.64V1320.5ZM1256.7 1320.5V1158.84H1258.75V1320.5ZM1257.82 1320.5V1148.73H1259.87V1320.5ZM1258.93 1320.5V1199.25H1260.98V1320.5ZM1260.05 1320.5V1209.36H1262.1V1320.5ZM1261.17 1320.5V1219.46H1263.22V1320.5ZM1262.28 1320.5V1224.51H1264.33V1320.5ZM1263.4 1320.5V1214.41H1265.45V1320.5ZM1264.51 1320.5V1209.36H1266.56V1320.5ZM1265.63 1320.5V1168.94H1267.68V1320.5ZM1266.74 1320.5V1128.52H1268.79V1320.5ZM1267.86 1320.5V1108.32H1269.91V1320.5ZM1268.97 1320.5V1088.11H1271.02V1320.5ZM1270.09 1320.5V1138.63H1272.14V1320.5ZM1271.2 1320.5V1179.04H1273.25V1320.5ZM1272.32 1320.5V1173.99H1274.37V1320.5ZM1273.43 1320.5V1168.94H1275.48V1320.5ZM1274.55 1320.5V1158.84H1276.6V1320.5ZM1275.66 1320.5V1168.94H1277.71V1320.5ZM1276.78 1320.5V1168.94H1278.83V1320.5ZM1277.89 1320.5V1199.25H1279.94V1320.5ZM1279.01 1320.5V1199.25H1281.06V1320.5ZM1280.12 1320.5V1199.25H1282.17V1320.5ZM1281.24 1320.5V1173.99H1283.29V1320.5ZM1282.35 1320.5V1184.1H1284.4V1320.5ZM1283.47 1320.5V1184.1H1285.52V1320.5ZM1284.58 1320.5V1184.1H1286.63V1320.5ZM1285.7 1320.5V1189.15H1287.75V1320.5ZM1286.81 1320.5V1194.2H1288.86V1320.5ZM1287.93 1320.5V1189.15H1289.98V1320.5ZM1289.04 1320.5V1189.15H1291.09V1320.5ZM1290.16 1320.5V1189.15H1292.21V1320.5ZM1291.28 1320.5V1189.15H1293.33V1320.5ZM1292.39 1320.5V1184.1H1294.44V1320.5ZM1293.51 1320.5V1184.1H1295.56V1320.5ZM1294.62 1320.5V1184.1H1296.67V1320.5ZM1295.74 1320.5V1189.15H1297.79V1320.5ZM1296.85 1320.5V1194.2H1298.9V1320.5ZM1297.97 1320.5V1194.2H1300.02V1320.5ZM1299.08 1320.5V1199.25H1301.13V1320.5ZM1300.2 1320.5V1199.25H1302.25V1320.5ZM1301.31 1320.5V1179.04H1303.36V1320.5ZM1302.43 1320.5V1017.38H1304.48V1320.5ZM1303.54 1320.5V1027.48H1305.59V1320.5ZM1304.66 1320.5V1032.54H1306.71V1320.5ZM1305.77 1320.5V1007.28H1307.82V1320.5ZM1306.89 1320.5V1103.26H1308.94V1320.5ZM1308 1320.5V1179.04H1310.05V1320.5ZM1309.12 1320.5V1189.15H1311.17V1320.5ZM1310.23 1320.5V1194.2H1312.28V1320.5ZM1311.35 1320.5V1194.2H1313.4V1320.5ZM1312.46 1320.5V1194.2H1314.51V1320.5ZM1313.58 1320.5V1189.15H1315.63V1320.5ZM1314.69 1320.5V1189.15H1316.74V1320.5ZM1315.81 1320.5V1194.2H1317.86V1320.5ZM1316.92 1320.5V1118.42H1318.97V1320.5ZM1318.04 1320.5V1168.94H1320.09V1320.5ZM1319.15 1320.5V1179.04H1321.2V1320.5ZM1320.27 1320.5V1173.99H1322.32V1320.5ZM1321.38 1320.5V1173.99H1323.43V1320.5ZM1322.5 1320.5V1113.37H1324.55V1320.5ZM1323.62 1320.5V1123.47H1325.67V1320.5ZM1324.73 1320.5V1128.52H1326.78V1320.5ZM1325.85 1320.5V1113.37H1327.9V1320.5ZM1326.96 1320.5V1143.68H1329.01V1320.5ZM1328.08 1320.5V1163.89H1330.13V1320.5ZM1329.19 1320.5V1168.94H1331.24V1320.5ZM1330.31 1320.5V1138.63H1332.36V1320.5ZM1331.42 1320.5V1123.47H1333.47V1320.5ZM1332.54 1320.5V1113.37H1334.59V1320.5ZM1333.65 1320.5V1158.84H1335.7V1320.5ZM1334.77 1320.5V1158.84H1336.82V1320.5ZM1335.88 1320.5V1168.94H1337.93V1320.5ZM1337 1320.5V1168.94H1339.05V1320.5ZM1338.11 1320.5V1168.94H1340.16V1320.5ZM1339.23 1320.5V1168.94H1341.28V1320.5ZM1340.34 1320.5V1128.52H1342.39V1320.5ZM1341.46 1320.5V1133.58H1343.51V1320.5ZM1342.57 1320.5V1108.32H1344.62V1320.5ZM1343.69 1320.5V1123.47H1345.74V1320.5ZM1344.8 1320.5V1128.52H1346.85V1320.5ZM1345.92 1320.5V1153.78H1347.97V1320.5ZM1347.03 1320.5V1153.78H1349.08V1320.5ZM1348.15 1320.5V1204.3H1350.2V1320.5ZM1349.26 1320.5V1259.88H1351.31V1320.5ZM1350.38 1320.5V1259.88H1352.43V1320.5ZM1351.49 1320.5V1259.88H1353.54V1320.5ZM1352.61 1320.5V1264.93H1354.66V1320.5ZM1353.73 1320.5V1259.88H1355.78V1320.5ZM1354.84 1320.5V1259.88H1356.89V1320.5ZM1355.96 1320.5V1264.93H1358.01V1320.5ZM1357.07 1320.5V1259.88H1359.12V1320.5ZM1533.27 1320.5V1259.88H1535.32V1320.5ZM1534.38 1320.5V1264.93H1536.43V1320.5ZM1535.5 1320.5V1259.88H1537.55V1320.5ZM1536.61 1320.5V1259.88H1538.66V1320.5ZM1537.73 1320.5V1259.88H1539.78V1320.5ZM1538.84 1320.5V1259.88H1540.89V1320.5ZM1539.96 1320.5V1259.88H1542.01V1320.5ZM1541.08 1320.5V1259.88H1543.13V1320.5ZM1542.19 1320.5V1259.88H1544.24V1320.5ZM1543.31 1320.5V1259.88H1545.36V1320.5ZM1544.42 1320.5V1229.56H1546.47V1320.5ZM1545.54 1320.5V1179.04H1547.59V1320.5ZM1546.65 1320.5V1138.63H1548.7V1320.5ZM1547.77 1320.5V1128.52H1549.82V1320.5ZM1548.88 1320.5V1072.95H1550.93V1320.5ZM1550 1320.5V997.17H1552.05V1320.5ZM1551.11 1320.5V987.07H1553.16V1320.5ZM1552.23 1320.5V976.96H1554.28V1320.5ZM1553.34 1320.5V956.76H1555.39V1320.5ZM1554.46 1320.5V956.76H1556.51V1320.5ZM1555.57 1320.5V956.76H1557.62V1320.5ZM1556.69 1320.5V901.18H1558.74V1320.5ZM1557.8 1320.5V1088.11H1559.85V1320.5ZM1558.92 1320.5V1012.33H1560.97V1320.5ZM1560.03 1320.5V961.81H1562.08V1320.5ZM1561.15 1320.5V982.02H1563.2V1320.5ZM1562.26 1320.5V982.02H1564.31V1320.5ZM1563.38 1320.5V987.07H1565.43V1320.5ZM1564.49 1320.5V987.07H1566.54V1320.5ZM1565.61 1320.5V906.24H1567.66V1320.5ZM1566.72 1320.5V971.91H1568.77V1320.5ZM1567.84 1320.5V1088.11H1569.89V1320.5ZM1568.95 1320.5V1093.16H1571V1320.5ZM1570.07 1320.5V1158.84H1572.12V1320.5ZM1571.18 1320.5V1123.47H1573.23V1320.5ZM1572.3 1320.5V1138.63H1574.35V1320.5ZM1573.42 1320.5V1138.63H1575.47V1320.5ZM1574.53 1320.5V1138.63H1576.58V1320.5ZM1575.65 1320.5V1143.68H1577.7V1320.5ZM1576.76 1320.5V1138.63H1578.81V1320.5ZM1577.88 1320.5V1133.58H1579.93V1320.5ZM1578.99 1320.5V1057.8H1581.04V1320.5ZM1580.11 1320.5V1057.8H1582.16V1320.5ZM1581.22 1320.5V956.76H1583.27V1320.5ZM1582.34 1320.5V1148.73H1584.39V1320.5ZM1583.45 1320.5V1103.26H1585.5V1320.5ZM1584.57 1320.5V1083.06H1586.62V1320.5ZM1585.68 1320.5V1072.95H1587.73V1320.5ZM1586.8 1320.5V966.86H1588.85V1320.5ZM1587.91 1320.5V1103.26H1589.96V1320.5ZM1589.03 1320.5V1158.84H1591.08V1320.5ZM1590.14 1320.5V1163.89H1592.19V1320.5ZM1591.26 1320.5V1113.37H1593.31V1320.5ZM1592.37 1320.5V1113.37H1594.42V1320.5ZM1593.49 1320.5V1067.9H1595.54V1320.5ZM1594.6 1320.5V976.96H1596.65V1320.5ZM1595.72 1320.5V976.96H1597.77V1320.5ZM1596.83 1320.5V911.29H1598.88V1320.5ZM1597.95 1320.5V1047.69H1600V1320.5ZM1599.06 1320.5V1078H1601.11V1320.5ZM1600.18 1320.5V1138.63H1602.23V1320.5ZM1601.29 1320.5V1143.68H1603.34V1320.5ZM1602.41 1320.5V1143.68H1604.46V1320.5ZM1603.53 1320.5V1123.47H1605.58V1320.5ZM1604.64 1320.5V1113.37H1606.69V1320.5ZM1605.76 1320.5V1133.58H1607.81V1320.5ZM1606.87 1320.5V1143.68H1608.92V1320.5ZM1607.99 1320.5V1148.73H1610.04V1320.5ZM1609.1 1320.5V1153.78H1611.15V1320.5ZM1610.22 1320.5V1143.68H1612.27V1320.5ZM1611.33 1320.5V1163.89H1613.38V1320.5ZM1612.45 1320.5V1158.84H1614.5V1320.5ZM1613.56 1320.5V1153.78H1615.61V1320.5ZM1614.68 1320.5V1158.84H1616.73V1320.5ZM1615.79 1320.5V1158.84H1617.84V1320.5ZM1616.91 1320.5V1163.89H1618.96V1320.5ZM1618.02 1320.5V1168.94H1620.07V1320.5ZM1619.14 1320.5V1163.89H1621.19V1320.5ZM1620.25 1320.5V1168.94H1622.3V1320.5ZM1621.37 1320.5V1179.04H1623.42V1320.5ZM1622.48 1320.5V1173.99H1624.53V1320.5ZM1623.6 1320.5V1022.43H1625.65V1320.5ZM1624.71 1320.5V1083.06H1626.76V1320.5ZM1625.83 1320.5V1083.06H1627.88V1320.5ZM1626.94 1320.5V1173.99H1628.99V1320.5ZM1628.06 1320.5V1168.94H1630.11V1320.5ZM1629.17 1320.5V1042.64H1631.22V1320.5ZM1630.29 1320.5V1042.64H1632.34V1320.5ZM1631.4 1320.5V936.55H1633.45V1320.5ZM1632.52 1320.5V1002.22H1634.57V1320.5ZM1633.63 1320.5V1002.22H1635.68V1320.5ZM1634.75 1320.5V1017.38H1636.8V1320.5ZM1635.87 1320.5V1027.48H1637.92V1320.5ZM1636.98 1320.5V1138.63H1639.03V1320.5ZM1638.1 1320.5V1143.68H1640.15V1320.5ZM1639.21 1320.5V1108.32H1641.26V1320.5ZM1640.33 1320.5V1168.94H1642.38V1320.5ZM1641.44 1320.5V1163.89H1643.49V1320.5ZM1642.56 1320.5V1148.73H1644.61V1320.5ZM1643.67 1320.5V1153.78H1645.72V1320.5ZM1644.79 1320.5V1153.78H1646.84V1320.5ZM1645.9 1320.5V1158.84H1647.95V1320.5ZM1647.02 1320.5V1163.89H1649.07V1320.5ZM1648.13 1320.5V1168.94H1650.18V1320.5ZM1649.25 1320.5V1173.99H1651.3V1320.5ZM1650.36 1320.5V1173.99H1652.41V1320.5ZM1651.48 1320.5V1168.94H1653.53V1320.5ZM1652.59 1320.5V1168.94H1654.64V1320.5ZM1653.71 1320.5V1138.63H1655.76V1320.5ZM1654.82 1320.5V1128.52H1656.87V1320.5ZM1655.94 1320.5V1123.47H1657.99V1320.5ZM1657.05 1320.5V1168.94H1659.1V1320.5ZM1658.17 1320.5V1168.94H1660.22V1320.5ZM1659.28 1320.5V1168.94H1661.33V1320.5ZM1660.4 1320.5V1168.94H1662.45V1320.5ZM1661.51 1320.5V1163.89H1663.56V1320.5ZM1662.63 1320.5V1168.94H1664.68V1320.5ZM1663.74 1320.5V1184.1H1665.79V1320.5ZM1664.86 1320.5V1184.1H1666.91V1320.5ZM1665.98 1320.5V1194.2H1668.03V1320.5ZM1667.09 1320.5V1264.93H1669.14V1320.5ZM1668.21 1320.5V1259.88H1670.26V1320.5ZM1669.32 1320.5V1264.93H1671.37V1320.5ZM1670.44 1320.5V1259.88H1672.49V1320.5ZM1671.55 1320.5V1259.88H1673.6V1320.5ZM1672.67 1320.5V1264.93H1674.72V1320.5ZM1673.78 1320.5V1259.88H1675.83V1320.5ZM1674.9 1320.5V1259.88H1676.95V1320.5ZM1676.01 1320.5V1264.93H1678.06V1320.5ZM1677.13 1320.5V1264.93H1679.18V1320.5ZM1678.24 1320.5V1264.93H1680.29V1320.5ZM1854.44 1320.5V1259.88H1856.49V1320.5ZM1855.56 1320.5V1259.88H1857.61V1320.5ZM1856.67 1320.5V1259.88H1858.72V1320.5ZM1857.79 1320.5V1264.93H1859.84V1320.5ZM1858.9 1320.5V1259.88H1860.95V1320.5ZM1860.02 1320.5V1259.88H1862.07V1320.5ZM1861.13 1320.5V1259.88H1863.18V1320.5ZM1862.25 1320.5V1239.67H1864.3V1320.5ZM1863.36 1320.5V1194.2H1865.41V1320.5ZM1864.48 1320.5V1168.94H1866.53V1320.5ZM1865.59 1320.5V1148.73H1867.64V1320.5ZM1866.71 1320.5V1189.15H1868.76V1320.5ZM1867.82 1320.5V1189.15H1869.87V1320.5ZM1868.94 1320.5V1072.95H1870.99V1320.5ZM1870.05 1320.5V987.07H1872.1V1320.5ZM1871.17 1320.5V987.07H1873.22V1320.5ZM1872.28 1320.5V987.07H1874.33V1320.5ZM1873.4 1320.5V1194.2H1875.45V1320.5ZM1874.51 1320.5V1017.38H1876.56V1320.5ZM1875.63 1320.5V992.12H1877.68V1320.5ZM1876.74 1320.5V997.17H1878.79V1320.5ZM1877.86 1320.5V1002.22H1879.91V1320.5ZM1878.97 1320.5V1173.99H1881.02V1320.5ZM1880.09 1320.5V1189.15H1882.14V1320.5ZM1881.2 1320.5V1138.63H1883.25V1320.5ZM1882.32 1320.5V1017.38H1884.37V1320.5ZM1883.43 1320.5V1017.38H1885.48V1320.5ZM1884.55 1320.5V855.72H1886.6V1320.5ZM1885.67 1320.5V1057.8H1887.72V1320.5ZM1886.78 1320.5V1133.58H1888.83V1320.5ZM1887.9 1320.5V1138.63H1889.95V1320.5ZM1889.01 1320.5V1108.32H1891.06V1320.5ZM1890.13 1320.5V1128.52H1892.18V1320.5ZM1891.24 1320.5V1143.68H1893.29V1320.5ZM1892.36 1320.5V1027.48H1894.41V1320.5ZM1893.47 1320.5V1037.59H1895.52V1320.5ZM1894.59 1320.5V1052.74H1896.64V1320.5ZM1895.7 1320.5V1027.48H1897.75V1320.5ZM1896.82 1320.5V997.17H1898.87V1320.5ZM1897.93 1320.5V966.86H1899.98V1320.5ZM1899.05 1320.5V951.7H1901.1V1320.5ZM1900.16 1320.5V936.55H1902.21V1320.5ZM1901.28 1320.5V1163.89H1903.33V1320.5ZM1902.39 1320.5V1194.2H1904.44V1320.5ZM1903.51 1320.5V1179.04H1905.56V1320.5ZM1904.62 1320.5V1194.2H1906.67V1320.5ZM1905.74 1320.5V1194.2H1907.79V1320.5ZM1906.85 1320.5V1189.15H1908.9V1320.5ZM1907.97 1320.5V1173.99H1910.02V1320.5ZM1909.08 1320.5V1128.52H1911.13V1320.5ZM1910.2 1320.5V1179.04H1912.25V1320.5ZM1911.31 1320.5V1194.2H1913.36V1320.5ZM1912.43 1320.5V1209.36H1914.48V1320.5ZM1913.54 1320.5V1219.46H1915.59V1320.5ZM1914.66 1320.5V1128.52H1916.71V1320.5ZM1915.78 1320.5V1168.94H1917.83V1320.5ZM1916.89 1320.5V1179.04H1918.94V1320.5ZM1918.01 1320.5V1143.68H1920.06V1320.5ZM1919.12 1320.5V1138.63H1921.17V1320.5ZM1920.24 1320.5V1138.63H1922.29V1320.5ZM1921.35 1320.5V1143.68H1923.4V1320.5ZM1922.47 1320.5V1153.78H1924.52V1320.5ZM1923.58 1320.5V1163.89H1925.63V1320.5ZM1924.7 1320.5V1163.89H1926.75V1320.5ZM1925.81 1320.5V1168.94H1927.86V1320.5ZM1926.93 1320.5V1168.94H1928.98V1320.5ZM1928.04 1320.5V1173.99H1930.09V1320.5ZM1929.16 1320.5V1173.99H1931.21V1320.5ZM1930.27 1320.5V1179.04H1932.32V1320.5ZM1931.39 1320.5V1173.99H1933.44V1320.5ZM1932.5 1320.5V1168.94H1934.55V1320.5ZM1933.62 1320.5V1168.94H1935.67V1320.5ZM1934.73 1320.5V1168.94H1936.78V1320.5ZM1935.85 1320.5V1163.89H1937.9V1320.5ZM1936.96 1320.5V1168.94H1939.01V1320.5ZM1938.08 1320.5V1168.94H1940.13V1320.5ZM1939.19 1320.5V1158.84H1941.24V1320.5ZM1940.31 1320.5V1158.84H1942.36V1320.5ZM1941.42 1320.5V1163.89H1943.47V1320.5ZM1942.54 1320.5V1037.59H1944.59V1320.5ZM1943.65 1320.5V1027.48H1945.7V1320.5ZM1944.77 1320.5V936.55H1946.82V1320.5ZM1945.88 1320.5V1032.54H1947.93V1320.5ZM1947 1320.5V1032.54H1949.05V1320.5ZM1948.12 1320.5V1138.63H1950.17V1320.5ZM1949.23 1320.5V1143.68H1951.28V1320.5ZM1950.35 1320.5V1153.78H1952.4V1320.5ZM1951.46 1320.5V1163.89H1953.51V1320.5ZM1952.58 1320.5V1163.89H1954.63V1320.5ZM1953.69 1320.5V1189.15H1955.74V1320.5ZM1954.81 1320.5V1179.04H1956.86V1320.5ZM1955.92 1320.5V1083.06H1957.97V1320.5ZM1957.04 1320.5V1083.06H1959.09V1320.5ZM1958.15 1320.5V1088.11H1960.2V1320.5ZM1959.27 1320.5V1173.99H1961.32V1320.5ZM1960.38 1320.5V1173.99H1962.43V1320.5ZM1961.5 1320.5V1168.94H1963.55V1320.5ZM1962.61 1320.5V1168.94H1964.66V1320.5ZM1963.73 1320.5V1173.99H1965.78V1320.5ZM1964.84 1320.5V1173.99H1966.89V1320.5ZM1965.96 1320.5V1168.94H1968.01V1320.5ZM1967.07 1320.5V1173.99H1969.12V1320.5ZM1968.19 1320.5V1173.99H1970.24V1320.5ZM1969.3 1320.5V1138.63H1971.35V1320.5ZM1970.42 1320.5V1098.21H1972.47V1320.5ZM1971.53 1320.5V1143.68H1973.58V1320.5ZM1972.65 1320.5V1143.68H1974.7V1320.5ZM1973.76 1320.5V1179.04H1975.81V1320.5ZM1974.88 1320.5V1194.2H1976.93V1320.5ZM1975.99 1320.5V1239.67H1978.04V1320.5ZM1977.11 1320.5V1239.67H1979.16V1320.5ZM1978.23 1320.5V1244.72H1980.28V1320.5ZM1979.34 1320.5V1264.93H1981.39V1320.5ZM1980.46 1320.5V1264.93H1982.51V1320.5ZM1981.57 1320.5V1259.88H1983.62V1320.5ZM1982.69 1320.5V1259.88H1984.74V1320.5ZM1983.8 1320.5V1264.93H1985.85V1320.5ZM1984.92 1320.5V1259.88H1986.97V1320.5ZM1986.03 1320.5V1264.93H1988.08V1320.5ZM1987.15 1320.5V1259.88H1989.2V1320.5ZM1988.26 1320.5V1259.88H1990.31V1320.5ZM1989.38 1320.5V1264.93H1991.43V1320.5ZM1990.49 1320.5V1259.88H1992.54V1320.5ZM1991.61 1320.5V1264.93H1993.66V1320.5ZM1992.72 1320.5V1259.88H1994.77V1320.5ZM1993.84 1320.5V1259.88H1995.89V1320.5ZM1994.95 1320.5V1259.88H1997V1320.5ZM1996.07 1320.5V1259.88H1998.12V1320.5ZM1997.18 1320.5V1264.93H1999.23V1320.5ZM1998.3 1320.5V1259.88H2000.35V1320.5ZM1999.41 1320.5V1264.93H2001.46V1320.5Z" fill="#24906f"/>
<path d="M167.5 815.3V1321.8" stroke="#3c3c3c" stroke-width="1.3" fill="none"/>
<path d="M167.9 1321.2H2416.4" stroke="#707070" stroke-width="1.5" fill="none"/>
<path d="M156.6 1320.5H167.2M156.6 1269.98H167.2M156.6 1219.46H167.2M156.6 1168.94H167.2M156.6 1118.42H167.2M156.6 1067.9H167.2M156.6 1017.38H167.2M156.6 966.86H167.2M156.6 916.34H167.2M156.6 865.82H167.2M156.6 815.3H167.2M168.2 1322V1331.8M489.37 1322V1331.8M810.54 1322V1331.8M1131.71 1322V1331.8M1452.89 1322V1331.8M1774.06 1322V1331.8M2095.23 1322V1331.8" stroke="#9c9c9c" stroke-width="1.25" fill="none"/>
<text x="146.7" y="1327.1" text-anchor="end" fill="#444" style="font-size:20.2px">0</text>
<text x="146.7" y="1276.58" text-anchor="end" fill="#444" style="font-size:20.2px">10</text>
<text x="146.7" y="1226.06" text-anchor="end" fill="#444" style="font-size:20.2px">20</text>
<text x="146.7" y="1175.54" text-anchor="end" fill="#444" style="font-size:20.2px">30</text>
<text x="146.7" y="1125.02" text-anchor="end" fill="#444" style="font-size:20.2px">40</text>
<text x="146.7" y="1074.5" text-anchor="end" fill="#444" style="font-size:20.2px">50</text>
<text x="146.7" y="1023.98" text-anchor="end" fill="#444" style="font-size:20.2px">60</text>
<text x="146.7" y="973.46" text-anchor="end" fill="#444" style="font-size:20.2px">70</text>
<text x="146.7" y="922.94" text-anchor="end" fill="#444" style="font-size:20.2px">80</text>
<text x="146.7" y="872.42" text-anchor="end" fill="#444" style="font-size:20.2px">90</text>
<text x="146.7" y="821.9" text-anchor="end" fill="#444" style="font-size:20.2px">100</text>
<text x="168.2" y="1356.8" text-anchor="middle" fill="#000" style="font-size:20.2px">dim. 25</text>
<text x="489.37" y="1356.8" text-anchor="middle" fill="#000" style="font-size:20.2px">lun. 26</text>
<text x="810.54" y="1356.8" text-anchor="middle" fill="#000" style="font-size:20.2px">mar. 27</text>
<text x="1131.71" y="1356.8" text-anchor="middle" fill="#000" style="font-size:20.2px">mer. 28</text>
<text x="1452.89" y="1356.8" text-anchor="middle" fill="#000" style="font-size:20.2px">jeu. 29</text>
<text x="1774.06" y="1356.8" text-anchor="middle" fill="#000" style="font-size:20.2px">ven. 30</text>
<text x="2095.23" y="1356.8" text-anchor="middle" fill="#000" style="font-size:20.2px">sam. 31</text>
<text transform="translate(86.4 1067) rotate(-90)" text-anchor="middle" fill="#444" style="font-family:&quot;DejaVu Sans Condensed&quot;,&quot;DejaVu Sans&quot;,sans-serif;font-stretch:condensed;font-size:22.4px" textLength="30.5" lengthAdjust="spacingAndGlyphs">kW</text>
<g fill="#fff" stroke="#828282" stroke-width="3.1">
<rect x="561.8" y="805.9" width="412.3" height="58" rx="9" ry="9"/>
<rect x="1099.9" y="805.9" width="412.3" height="58" rx="9" ry="9"/>
<rect x="1609.9" y="805.9" width="412.3" height="58" rx="9" ry="9"/>
</g>
<text class="tah" x="777.7" y="845.2" text-anchor="middle" textLength="336" lengthAdjust="spacingAndGlyphs">Consommation: 2 998 kWh</text>
<text class="tah" x="1316.3" y="845.2" text-anchor="middle" textLength="188.5" lengthAdjust="spacingAndGlyphs" xml:space="preserve">P Max :  94 kW</text>
<text class="tah" x="1826" y="845.2" text-anchor="middle" textLength="160.5" lengthAdjust="spacingAndGlyphs">P min : 9 kW</text>
<!-- G2E logo -->
<g id="g2e">
<rect x="2322.2" y="1322.4" width="115.5" height="56" fill="#fff"/>
<text x="2332.6" y="1363.3" fill="#0670b8" stroke="#0670b8" stroke-width="1.2" stroke-linejoin="round" style="font-family:&quot;DejaVu Sans&quot;,sans-serif;font-size:40.5px" textLength="32.5" lengthAdjust="spacingAndGlyphs">G</text>
<text x="2364.4" y="1363.5" fill="#0670b8" stroke="#0670b8" stroke-width="1.2" stroke-linejoin="round" style="font-family:&quot;DejaVu Sans&quot;,sans-serif;font-size:35.5px" textLength="22.6" lengthAdjust="spacingAndGlyphs">2</text>
<path d="M2392.1 1324.6L2383.6 1338.2L2390.8 1340.9L2389 1363L2400 1338.6L2391.8 1335Z" fill="#ec5a28"/>
<path d="M2403 1339.1H2424.2L2418.5 1344.8H2400.9ZM2399.4 1348.1H2418.3L2413.4 1353.8H2396.8ZM2395.8 1357.2H2417L2411.3 1363.1H2392.9Z" fill="#f39120"/>
<text x="2393.4" y="1334.3" fill="#f06e3c" style="font-family:&quot;Liberation Sans&quot;,sans-serif;font-size:7.5px;font-weight:bold" textLength="30.8" lengthAdjust="spacingAndGlyphs">FRANCE</text>
<text x="2339.2" y="1368.3" fill="#5b9bd5" style="font-family:&quot;Liberation Sans&quot;,sans-serif;font-size:4.2px" textLength="75" lengthAdjust="spacingAndGlyphs">Optimisation des ressources énergétiques</text>
</g>

</svg>
</div>
</body>
</html>
